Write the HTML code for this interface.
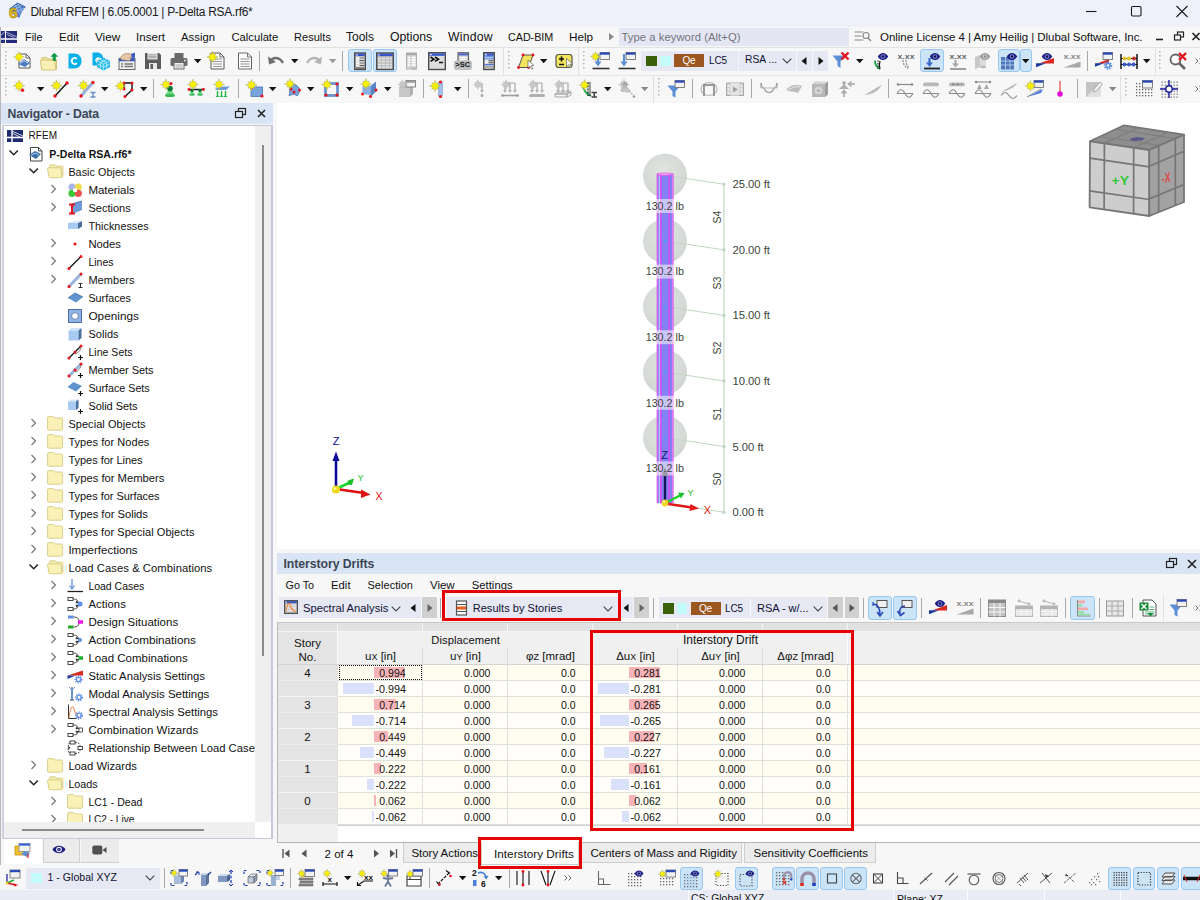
<!DOCTYPE html>
<html><head><meta charset="utf-8"><title>Dlubal RFEM</title>
<style>
*{box-sizing:border-box;margin:0;padding:0}
html,body{width:1200px;height:900px;overflow:hidden;background:#f0f0f0;font-family:"Liberation Sans","DejaVu Sans",sans-serif;font-size:11px;color:#111}
.a{position:absolute;display:block}
.t{position:absolute;white-space:nowrap;line-height:16px;height:16px;display:block}
svg{overflow:visible}
</style></head><body>
<div class="a" style="left:0px;top:0px;width:1200px;height:27px;background:#eef1f9;"></div>
<span class="t" style="left:30.50px;top:4px;font-size:12px;color:#1b1b1b;letter-spacing:-0.294px;">Dlubal RFEM | 6.05.0001 | P-Delta RSA.rf6*</span>
<svg class="a" style="left:1080px;top:0px;" width="120" height="24" viewBox="0 0 120 24"><path d="M6 11.5h10.5" stroke="#1a1a1a" stroke-width="1.1" fill="none"/><rect x="51.5" y="6.5" width="9.5" height="9.5" rx="1.2" fill="none" stroke="#1a1a1a" stroke-width="1.1"/><path d="M96.5 6l11 11M107.5 6l-11 11" stroke="#1a1a1a" stroke-width="1.1" fill="none"/></svg>
<div class="a" style="left:0px;top:27px;width:1200px;height:20px;background:#f7f7f7;"></div>
<span class="t" style="left:25.00px;top:29px;font-size:10.75px;color:#101010;letter-spacing:0.065px;">File</span>
<span class="t" style="left:59.00px;top:29px;font-size:11.5px;color:#101010;letter-spacing:0.046px;">Edit</span>
<span class="t" style="left:95.00px;top:29px;font-size:11.75px;color:#101010;letter-spacing:-0.037px;">View</span>
<span class="t" style="left:136.00px;top:29px;font-size:11.5px;color:#101010;letter-spacing:0.040px;">Insert</span>
<span class="t" style="left:181.00px;top:29px;font-size:11.25px;color:#101010;letter-spacing:0.064px;">Assign</span>
<span class="t" style="left:231.50px;top:29px;font-size:11.25px;color:#101010;letter-spacing:-0.022px;">Calculate</span>
<span class="t" style="left:294.00px;top:29px;font-size:11px;color:#101010;letter-spacing:0.046px;">Results</span>
<span class="t" style="left:346.00px;top:29px;font-size:12px;color:#101010;letter-spacing:-0.002px;">Tools</span>
<span class="t" style="left:390.00px;top:29px;font-size:12.25px;color:#101010;letter-spacing:-0.006px;">Options</span>
<span class="t" style="left:448.00px;top:29px;font-size:12.25px;color:#101010;letter-spacing:0.185px;">Window</span>
<span class="t" style="left:508.00px;top:29px;font-size:10.75px;color:#101010;letter-spacing:-0.025px;">CAD-BIM</span>
<span class="t" style="left:569.00px;top:29px;font-size:11.75px;color:#101010;letter-spacing:-0.016px;">Help</span>
<div class="a" style="left:619px;top:28px;width:230px;height:18px;background:#e4e6f3;"></div>
<svg class="a" style="left:608px;top:31px;" width="8" height="12" viewBox="0 0 8 12"><path d="M1 2l5 3.7-5 3.7z" fill="#8a8a8a"/></svg>
<span class="t" style="left:621.50px;top:29px;font-size:11.25px;color:#74747c;letter-spacing:0.053px;">Type a keyword (Alt+Q)</span>
<span class="t" style="left:880.00px;top:29px;font-size:11.5px;color:#101010;letter-spacing:-0.044px;">Online License 4 | Amy Heilig | Dlubal Software, Inc.</span>
<div class="a" style="left:0px;top:47px;width:1200px;height:28px;background:#f7f7f7;border-top:1px solid #e2e2e2;"></div>
<div class="a" style="left:0px;top:75px;width:1200px;height:28px;background:#f7f7f7;border-top:1px solid #e4e4e4;"></div>
<div class="a" style="left:0px;top:27px;width:1px;height:873px;background:#b8b8bc;"></div>
<div class="a" style="left:1px;top:103px;width:1199px;height:788px;background:#f7f7f7;"></div>
<div class="a" style="left:1px;top:103px;width:272px;height:21px;background:#d9e5f4;"></div>
<span class="t" style="left:7.50px;top:106px;font-size:12.25px;font-weight:bold;color:#3b4656;letter-spacing:-0.159px;">Navigator - Data</span>
<div class="a" style="left:2px;top:125px;width:271px;height:714px;background:#fff;border:1px solid #c6c6d6;border-right:2px solid #c8c8d8;border-left:2px solid #d0d0de;"></div>
<div class="a" style="left:255px;top:126px;width:16px;height:695.5px;background:#efefef;"></div>
<div class="a" style="left:262px;top:145px;width:2px;height:511px;background:#8a8a8a;"></div>
<div class="a" style="left:4px;top:821.5px;width:251px;height:16.5px;background:#efefef;"></div>
<div class="a" style="left:21.5px;top:829px;width:182px;height:2px;background:#8a8a8a;"></div>
<div class="a" style="left:277px;top:103px;width:923px;height:446px;background:#fff;"></div>
<div class="a" style="left:277px;top:553px;width:923px;height:21px;background:#d9e5f4;"></div>
<span class="t" style="left:283.50px;top:556px;font-size:12.25px;font-weight:bold;color:#3b4656;letter-spacing:-0.060px;">Interstory Drifts</span>
<div class="a" style="left:277px;top:574px;width:923px;height:291px;background:#f7f7f7;"></div>
<span class="t" style="left:285.50px;top:577px;font-size:10.75px;color:#101010;letter-spacing:0.029px;">Go To</span>
<span class="t" style="left:331.00px;top:577px;font-size:11.25px;color:#101010;letter-spacing:0.050px;">Edit</span>
<span class="t" style="left:367.50px;top:577px;font-size:11px;color:#101010;letter-spacing:0.028px;">Selection</span>
<span class="t" style="left:430.00px;top:577px;font-size:11.5px;color:#101010;letter-spacing:-0.054px;">View</span>
<span class="t" style="left:471.70px;top:577px;font-size:11.25px;color:#101010;letter-spacing:0.041px;">Settings</span>
<div class="a" style="left:0px;top:865px;width:1200px;height:26px;background:#f7f7f7;"></div>
<div class="a" style="left:0px;top:889px;width:1200px;height:11px;background:#e9ebf5;border-top:1px solid #f4f4f8;"></div>
<div class="a" style="left:688px;top:890px;width:1px;height:10px;background:#fbfbfd;"></div>
<div class="a" style="left:893px;top:890px;width:1px;height:10px;background:#fbfbfd;"></div>
<div class="a" style="left:967px;top:890px;width:1px;height:10px;background:#fbfbfd;"></div>
<div class="a" style="left:1044px;top:890px;width:1px;height:10px;background:#fbfbfd;"></div>
<div class="a" style="left:1120px;top:890px;width:1px;height:10px;background:#fbfbfd;"></div>
<span class="t" style="left:691.00px;top:891px;font-size:10.25px;color:#101010;letter-spacing:0.072px;">CS: Global XYZ</span>
<span class="t" style="left:897.00px;top:891px;font-size:10.5px;color:#101010;letter-spacing:-0.012px;">Plane: XZ</span>
<div class="a" style="left:3px;top:126px;width:252px;height:695.500px;overflow:hidden">
<svg class="a" style="left:4px;top:1.8px;" width="16" height="16" viewBox="0 0 16 16"><rect x="0" y="2" width="16" height="12" fill="#1d2a6e"/><path d="M0 9.5h16" stroke="#fff" stroke-width="1.6"/><path d="M5 2v12" stroke="#fff" stroke-width="1.4"/><path d="M5 3l11 5M5 5l8 4" stroke="#fff" stroke-width=".8"/></svg>
<span class="t" style="left:25.50px;top:2px;font-size:10px;color:#111;letter-spacing:0.043px;">RFEM</span>
<svg class="a" style="left:4.5px;top:23.3px;" width="12" height="8" viewBox="0 0 12 8"><path d="M1.500 1.500l4.200 4.200 4.200-4.200" stroke="#222" stroke-width="1.500" fill="none"/></svg>
<svg class="a" style="left:25px;top:19.8px;" width="16" height="16" viewBox="0 0 16 16"><path d="M2.5 1.5h8l3.5 3.5v10h-11.5z" fill="#fff" stroke="#444" stroke-width="1"/><path d="M10.5 1.5v3.5h3.5" fill="none" stroke="#444"/><path d="M1 9l6-4 6 3-5 5z" fill="#3a6ea8"/><path d="M3 9.5l4-2.5 4 2" stroke="#bcd4ee" stroke-width="1" fill="none"/></svg>
<span class="t" style="left:46.20px;top:20px;font-size:10.5px;font-weight:bold;color:#111;letter-spacing:0.045px;">P-Delta RSA.rf6*</span>
<svg class="a" style="left:24.5px;top:41.3px;" width="12" height="8" viewBox="0 0 12 8"><path d="M1.500 1.500l4.200 4.200 4.200-4.200" stroke="#222" stroke-width="1.500" fill="none"/></svg>
<svg class="a" style="left:44px;top:37.9px;" width="16" height="15" viewBox="0 0 16 15"><path d="M2.700 1.800q0-1 1-1h4q0.800 0 1.200 0.700l0.400 0.700h5.600q1 0 1 1v9.500h-13.200z" fill="#f6eeb0" stroke="#d4c880" stroke-width=".9"/><path d="M0.600 4.800q-0.200-1 0.800-1h11.600q1 0 1.100 1l0.700 7.700q0.100 1.200-1 1.200h-10.600q-1.200 0-1.400-1.200z" fill="#f9f1b6" stroke="#d4c880" stroke-width=".9"/></svg>
<span class="t" style="left:65.40px;top:38px;font-size:10.75px;color:#111;letter-spacing:0.060px;">Basic Objects</span>
<svg class="a" style="left:47px;top:57.4px;" width="8" height="12" viewBox="0 0 8 12"><path d="M1.500 2l4 4-4 4" stroke="#7c7c7c" stroke-width="1.300" fill="none"/></svg>
<svg class="a" style="left:64px;top:55.8px;" width="16" height="16" viewBox="0 0 16 16"><circle cx="5" cy="5" r="3.6" fill="#a9b4ea"/><circle cx="11.3" cy="5" r="3.6" fill="#f0dc50"/><circle cx="5" cy="11.3" r="3.6" fill="#38c838"/><circle cx="11.3" cy="11.3" r="3.6" fill="#e85050"/><circle cx="8.1" cy="8.1" r="2.2" fill="#fff"/></svg>
<span class="t" style="left:85.40px;top:56px;font-size:11.5px;color:#111;letter-spacing:-0.050px;">Materials</span>
<svg class="a" style="left:47px;top:75.4px;" width="8" height="12" viewBox="0 0 8 12"><path d="M1.500 2l4 4-4 4" stroke="#7c7c7c" stroke-width="1.300" fill="none"/></svg>
<svg class="a" style="left:64px;top:73.8px;" width="16" height="16" viewBox="0 0 16 16"><path d="M5 4l10-3v9l-10 4z" fill="#6f9bd8"/><path d="M5 4l10-3" stroke="#4a74b4"/><path d="M2 4.5h6M2 13.5h6M5 4.5v9" stroke="#e8141c" stroke-width="2"/></svg>
<span class="t" style="left:85.40px;top:74px;font-size:11px;color:#111;letter-spacing:0.026px;">Sections</span>
<svg class="a" style="left:64px;top:91.8px;" width="16" height="16" viewBox="0 0 16 16"><path d="M1 5l10-2.5 4 0.5-10 2.5z" fill="#cfe2f8"/><path d="M1 5h10v6h-10z" fill="#a9cbf2"/><path d="M11 5l4-2v5.5l-4 2.5z" fill="#4a6ea0"/></svg>
<span class="t" style="left:85.40px;top:92px;font-size:10.75px;color:#111;letter-spacing:0.057px;">Thicknesses</span>
<svg class="a" style="left:47px;top:111.4px;" width="8" height="12" viewBox="0 0 8 12"><path d="M1.500 2l4 4-4 4" stroke="#7c7c7c" stroke-width="1.300" fill="none"/></svg>
<svg class="a" style="left:64px;top:109.8px;" width="16" height="16" viewBox="0 0 16 16"><circle cx="8" cy="8" r="1.6" fill="#e8141c"/></svg>
<span class="t" style="left:85.40px;top:110px;font-size:11.25px;color:#111;letter-spacing:-0.016px;">Nodes</span>
<svg class="a" style="left:47px;top:129.4px;" width="8" height="12" viewBox="0 0 8 12"><path d="M1.500 2l4 4-4 4" stroke="#7c7c7c" stroke-width="1.300" fill="none"/></svg>
<svg class="a" style="left:64px;top:127.8px;" width="16" height="16" viewBox="0 0 16 16"><path d="M2 14.5L14 2.5" stroke="#111" stroke-width="1.3"/><circle cx="2" cy="14.5" r="1.5" fill="#e8141c"/><circle cx="14" cy="2.5" r="1.5" fill="#e8141c"/></svg>
<span class="t" style="left:85.40px;top:128px;font-size:10.5px;color:#111;letter-spacing:-0.000px;">Lines</span>
<svg class="a" style="left:47px;top:147.4px;" width="8" height="12" viewBox="0 0 8 12"><path d="M1.500 2l4 4-4 4" stroke="#7c7c7c" stroke-width="1.300" fill="none"/></svg>
<svg class="a" style="left:64px;top:145.8px;" width="16" height="16" viewBox="0 0 16 16"><path d="M2 14.5L14 2" stroke="#9ab4dc" stroke-width="3"/><circle cx="2" cy="14.5" r="1.5" fill="#e8141c"/><circle cx="14" cy="2" r="1.5" fill="#e8141c"/><path d="M11.5 11.5h4M11.5 15.5h4M13.5 11.5v4" stroke="#333" stroke-width="1"/></svg>
<span class="t" style="left:85.40px;top:146px;font-size:11px;color:#111;letter-spacing:0.052px;">Members</span>
<svg class="a" style="left:64px;top:163.8px;" width="16" height="16" viewBox="0 0 16 16"><path d="M1 8l7-5 8 4-7 5.5z" fill="#5f93cf"/><path d="M1 8l7-5 8 4" fill="none" stroke="#3f6ea8" stroke-width=".8"/></svg>
<span class="t" style="left:85.40px;top:164px;font-size:10.75px;color:#111;letter-spacing:0.021px;">Surfaces</span>
<svg class="a" style="left:64px;top:181.8px;" width="16" height="16" viewBox="0 0 16 16"><rect x="1.5" y="1.5" width="13" height="13" fill="#8fb2e2" stroke="#4a70aa"/><circle cx="8" cy="8" r="3.4" fill="#fff" stroke="#4a70aa" stroke-width=".8"/></svg>
<span class="t" style="left:85.40px;top:182px;font-size:11.75px;color:#111;letter-spacing:0.040px;">Openings</span>
<svg class="a" style="left:64px;top:199.8px;" width="16" height="16" viewBox="0 0 16 16"><path d="M1.5 4.5l3-2.5h10l-3 2.5z" fill="#d2e4f8"/><path d="M1.5 4.5h10v10h-10z" fill="#a9cbf2"/><path d="M11.5 4.5l3-2.5v10l-3 2.5z" fill="#4a6ea0"/></svg>
<span class="t" style="left:85.40px;top:200px;font-size:11px;color:#111;letter-spacing:0.040px;">Solids</span>
<svg class="a" style="left:64px;top:217.8px;" width="16" height="16" viewBox="0 0 16 16"><path d="M2 14L14 2" stroke="#111" stroke-width="1.2"/><path d="M8 10c3-1 5-3 6-6" stroke="#666" fill="none" stroke-width=".8"/><circle cx="2" cy="14" r="1.5" fill="#e8141c"/><circle cx="8" cy="8" r="1.5" fill="#e8141c"/><circle cx="14" cy="2" r="1.5" fill="#e8141c"/><path d="M11 13.5h5M13.5 11v5" stroke="#111" stroke-width="1.2"/></svg>
<span class="t" style="left:85.40px;top:218px;font-size:10.5px;color:#111;letter-spacing:0.036px;">Line Sets</span>
<svg class="a" style="left:64px;top:235.8px;" width="16" height="16" viewBox="0 0 16 16"><path d="M2 14L14 2" stroke="#9ab4dc" stroke-width="3"/><path d="M8 10c3-1 5-3 6-6" stroke="#666" fill="none" stroke-width=".8"/><circle cx="2" cy="14" r="1.5" fill="#e8141c"/><circle cx="8" cy="8" r="1.5" fill="#e8141c"/><circle cx="14" cy="2" r="1.5" fill="#e8141c"/><path d="M11 13.5h5M13.5 11v5" stroke="#111" stroke-width="1.2"/></svg>
<span class="t" style="left:85.40px;top:236px;font-size:11px;color:#111;letter-spacing:-0.019px;">Member Sets</span>
<svg class="a" style="left:64px;top:253.8px;" width="16" height="16" viewBox="0 0 16 16"><path d="M0.5 7l6-5 8.5 4-6 5.5z" fill="#5f93cf"/><path d="M11 13.5h5M13.5 11v5" stroke="#111" stroke-width="1.2"/></svg>
<span class="t" style="left:85.40px;top:254px;font-size:10.75px;color:#111;letter-spacing:-0.022px;">Surface Sets</span>
<svg class="a" style="left:64px;top:271.8px;" width="16" height="16" viewBox="0 0 16 16"><path d="M1 3.5l2.5-2h8l-2.5 2z" fill="#d2e4f8"/><path d="M1 3.5h8v8.500h-8z" fill="#a9cbf2"/><path d="M9 3.5l2.500-2v8.500l-2.500 2z" fill="#4a6ea0"/><path d="M11 13.5h5M13.5 11v5" stroke="#111" stroke-width="1.2"/></svg>
<span class="t" style="left:85.40px;top:272px;font-size:11px;color:#111;letter-spacing:-0.033px;">Solid Sets</span>
<svg class="a" style="left:27px;top:291.4px;" width="8" height="12" viewBox="0 0 8 12"><path d="M1.500 2l4 4-4 4" stroke="#7c7c7c" stroke-width="1.300" fill="none"/></svg>
<svg class="a" style="left:44px;top:289.9px;" width="16" height="15" viewBox="0 0 16 15"><path d="M0.600 1.800q0-1.200 1.200-1.200h4.200q0.800 0 1.300 0.700l0.500 0.700h6.600q1.200 0 1.200 1.200v9.800q0 1.200-1.200 1.200h-12.600q-1.200 0-1.200-1.200z" fill="#f9f1b6" stroke="#d6ca84" stroke-width=".9"/></svg>
<span class="t" style="left:65.40px;top:290px;font-size:11px;color:#111;letter-spacing:0.052px;">Special Objects</span>
<svg class="a" style="left:27px;top:309.4px;" width="8" height="12" viewBox="0 0 8 12"><path d="M1.500 2l4 4-4 4" stroke="#7c7c7c" stroke-width="1.300" fill="none"/></svg>
<svg class="a" style="left:44px;top:307.9px;" width="16" height="15" viewBox="0 0 16 15"><path d="M0.600 1.800q0-1.200 1.200-1.200h4.200q0.800 0 1.300 0.700l0.500 0.700h6.600q1.200 0 1.200 1.200v9.800q0 1.200-1.200 1.200h-12.600q-1.200 0-1.200-1.200z" fill="#f9f1b6" stroke="#d6ca84" stroke-width=".9"/></svg>
<span class="t" style="left:65.40px;top:308px;font-size:11px;color:#111;letter-spacing:0.061px;">Types for Nodes</span>
<svg class="a" style="left:27px;top:327.4px;" width="8" height="12" viewBox="0 0 8 12"><path d="M1.500 2l4 4-4 4" stroke="#7c7c7c" stroke-width="1.300" fill="none"/></svg>
<svg class="a" style="left:44px;top:325.9px;" width="16" height="15" viewBox="0 0 16 15"><path d="M0.600 1.800q0-1.200 1.200-1.200h4.200q0.800 0 1.300 0.700l0.500 0.700h6.600q1.200 0 1.200 1.200v9.800q0 1.200-1.200 1.200h-12.600q-1.200 0-1.200-1.200z" fill="#f9f1b6" stroke="#d6ca84" stroke-width=".9"/></svg>
<span class="t" style="left:65.40px;top:326px;font-size:11px;color:#111;letter-spacing:-0.026px;">Types for Lines</span>
<svg class="a" style="left:27px;top:345.4px;" width="8" height="12" viewBox="0 0 8 12"><path d="M1.500 2l4 4-4 4" stroke="#7c7c7c" stroke-width="1.300" fill="none"/></svg>
<svg class="a" style="left:44px;top:343.9px;" width="16" height="15" viewBox="0 0 16 15"><path d="M0.600 1.800q0-1.200 1.200-1.200h4.200q0.800 0 1.300 0.700l0.500 0.700h6.600q1.200 0 1.200 1.200v9.800q0 1.200-1.200 1.200h-12.600q-1.200 0-1.200-1.200z" fill="#f9f1b6" stroke="#d6ca84" stroke-width=".9"/></svg>
<span class="t" style="left:65.40px;top:344px;font-size:11.25px;color:#111;letter-spacing:-0.021px;">Types for Members</span>
<svg class="a" style="left:27px;top:363.4px;" width="8" height="12" viewBox="0 0 8 12"><path d="M1.500 2l4 4-4 4" stroke="#7c7c7c" stroke-width="1.300" fill="none"/></svg>
<svg class="a" style="left:44px;top:361.9px;" width="16" height="15" viewBox="0 0 16 15"><path d="M0.600 1.800q0-1.200 1.200-1.200h4.200q0.800 0 1.300 0.700l0.500 0.700h6.600q1.200 0 1.200 1.200v9.800q0 1.200-1.200 1.200h-12.600q-1.200 0-1.200-1.200z" fill="#f9f1b6" stroke="#d6ca84" stroke-width=".9"/></svg>
<span class="t" style="left:65.40px;top:362px;font-size:11px;color:#111;letter-spacing:-0.028px;">Types for Surfaces</span>
<svg class="a" style="left:27px;top:381.4px;" width="8" height="12" viewBox="0 0 8 12"><path d="M1.500 2l4 4-4 4" stroke="#7c7c7c" stroke-width="1.300" fill="none"/></svg>
<svg class="a" style="left:44px;top:379.9px;" width="16" height="15" viewBox="0 0 16 15"><path d="M0.600 1.800q0-1.200 1.200-1.200h4.200q0.800 0 1.300 0.700l0.500 0.700h6.600q1.200 0 1.200 1.200v9.800q0 1.200-1.200 1.200h-12.600q-1.200 0-1.200-1.200z" fill="#f9f1b6" stroke="#d6ca84" stroke-width=".9"/></svg>
<span class="t" style="left:65.40px;top:380px;font-size:11.25px;color:#111;letter-spacing:-0.031px;">Types for Solids</span>
<svg class="a" style="left:27px;top:399.4px;" width="8" height="12" viewBox="0 0 8 12"><path d="M1.500 2l4 4-4 4" stroke="#7c7c7c" stroke-width="1.300" fill="none"/></svg>
<svg class="a" style="left:44px;top:397.9px;" width="16" height="15" viewBox="0 0 16 15"><path d="M0.600 1.800q0-1.200 1.200-1.200h4.200q0.800 0 1.300 0.700l0.500 0.700h6.600q1.200 0 1.200 1.200v9.800q0 1.200-1.200 1.200h-12.600q-1.200 0-1.200-1.200z" fill="#f9f1b6" stroke="#d6ca84" stroke-width=".9"/></svg>
<span class="t" style="left:65.40px;top:398px;font-size:11px;color:#111;letter-spacing:0.055px;">Types for Special Objects</span>
<svg class="a" style="left:27px;top:417.4px;" width="8" height="12" viewBox="0 0 8 12"><path d="M1.500 2l4 4-4 4" stroke="#7c7c7c" stroke-width="1.300" fill="none"/></svg>
<svg class="a" style="left:44px;top:415.9px;" width="16" height="15" viewBox="0 0 16 15"><path d="M0.600 1.800q0-1.200 1.200-1.200h4.200q0.800 0 1.300 0.700l0.500 0.700h6.600q1.200 0 1.200 1.200v9.800q0 1.200-1.200 1.200h-12.600q-1.200 0-1.200-1.200z" fill="#f9f1b6" stroke="#d6ca84" stroke-width=".9"/></svg>
<span class="t" style="left:65.40px;top:416px;font-size:11.5px;color:#111;letter-spacing:0.013px;">Imperfections</span>
<svg class="a" style="left:24.5px;top:437.3px;" width="12" height="8" viewBox="0 0 12 8"><path d="M1.500 1.500l4.200 4.200 4.200-4.200" stroke="#222" stroke-width="1.500" fill="none"/></svg>
<svg class="a" style="left:44px;top:433.9px;" width="16" height="15" viewBox="0 0 16 15"><path d="M2.700 1.800q0-1 1-1h4q0.800 0 1.200 0.700l0.400 0.700h5.600q1 0 1 1v9.500h-13.200z" fill="#f6eeb0" stroke="#d4c880" stroke-width=".9"/><path d="M0.600 4.800q-0.200-1 0.800-1h11.600q1 0 1.100 1l0.700 7.700q0.100 1.200-1 1.200h-10.600q-1.200 0-1.400-1.200z" fill="#f9f1b6" stroke="#d4c880" stroke-width=".9"/></svg>
<span class="t" style="left:65.40px;top:434px;font-size:11.25px;color:#111;letter-spacing:0.053px;">Load Cases &amp; Combinations</span>
<svg class="a" style="left:47px;top:453.4px;" width="8" height="12" viewBox="0 0 8 12"><path d="M1.500 2l4 4-4 4" stroke="#7c7c7c" stroke-width="1.300" fill="none"/></svg>
<svg class="a" style="left:64px;top:451.8px;" width="16" height="16" viewBox="0 0 16 16"><path d="M5 1v9" stroke="#5f8fd8" stroke-width="1.3"/><path d="M2.5 7.500l2.500 3.500 2.500-3.500" fill="none" stroke="#5f8fd8" stroke-width="1.2"/><path d="M0.5 13.500h15.500" stroke="#222" stroke-width="1.3"/></svg>
<span class="t" style="left:85.40px;top:452px;font-size:10.5px;color:#111;letter-spacing:-0.013px;">Load Cases</span>
<svg class="a" style="left:47px;top:471.4px;" width="8" height="12" viewBox="0 0 8 12"><path d="M1.500 2l4 4-4 4" stroke="#7c7c7c" stroke-width="1.300" fill="none"/></svg>
<svg class="a" style="left:64px;top:469.8px;" width="16" height="16" viewBox="0 0 16 16"><rect x="1" y="1.5" width="5" height="3" fill="#fff" stroke="#333" stroke-width=".9"/><rect x="1" y="11.500" width="5" height="3" fill="#fff" stroke="#333" stroke-width=".9"/><path d="M6 3c4 0 5 1.500 5.500 4M6 13c4 0 5-1.500 5.500-4" fill="none" stroke="#333" stroke-width=".9"/><path d="M9.500 4.500l2.500 2.500-3.500 0.300zM9.500 11.500l2.500-2.500-3.500-.3z" fill="#333"/><circle cx="13" cy="8" r="2.500" fill="#5f8fe8"/></svg>
<span class="t" style="left:85.40px;top:470px;font-size:11.25px;color:#111;letter-spacing:0.081px;">Actions</span>
<svg class="a" style="left:47px;top:489.4px;" width="8" height="12" viewBox="0 0 8 12"><path d="M1.500 2l4 4-4 4" stroke="#7c7c7c" stroke-width="1.300" fill="none"/></svg>
<svg class="a" style="left:64px;top:487.8px;" width="16" height="16" viewBox="0 0 16 16"><rect x="1" y="1.500" width="5.500" height="3" fill="#5f8fe8"/><rect x="1" y="11.500" width="5.500" height="3" fill="#28a828"/><path d="M6.500 3c4 0 5 1.500 5.500 4M6.500 13c4 0 5-1.500 5.500-4" fill="none" stroke="#333" stroke-width=".9"/><rect x="11" y="6.300" width="5" height="3.400" fill="#f010e8"/></svg>
<span class="t" style="left:85.40px;top:488px;font-size:11.5px;color:#111;letter-spacing:0.018px;">Design Situations</span>
<svg class="a" style="left:47px;top:507.4px;" width="8" height="12" viewBox="0 0 8 12"><path d="M1.500 2l4 4-4 4" stroke="#7c7c7c" stroke-width="1.300" fill="none"/></svg>
<svg class="a" style="left:64px;top:505.8px;" width="16" height="16" viewBox="0 0 16 16"><rect x="1" y="1.5" width="5" height="3" fill="#fff" stroke="#333" stroke-width=".9"/><rect x="1" y="11.500" width="5" height="3" fill="#fff" stroke="#333" stroke-width=".9"/><path d="M6 3c4 0 5 1.500 5.500 4M6 13c4 0 5-1.500 5.500-4" fill="none" stroke="#333" stroke-width=".9"/><path d="M9.500 4.500l2.500 2.500-3.500 0.300zM9.500 11.500l2.500-2.500-3.500-.3z" fill="#333"/><path d="M13 5.500l2.500 2.500-2.500 2.500-2.500-2.500z" fill="#5f8fe8"/></svg>
<span class="t" style="left:85.40px;top:506px;font-size:11.75px;color:#111;letter-spacing:-0.016px;">Action Combinations</span>
<svg class="a" style="left:47px;top:525.4px;" width="8" height="12" viewBox="0 0 8 12"><path d="M1.500 2l4 4-4 4" stroke="#7c7c7c" stroke-width="1.300" fill="none"/></svg>
<svg class="a" style="left:64px;top:523.8px;" width="16" height="16" viewBox="0 0 16 16"><rect x="1" y="1.5" width="5" height="3" fill="#fff" stroke="#333" stroke-width=".9"/><rect x="1" y="11.500" width="5" height="3" fill="#fff" stroke="#333" stroke-width=".9"/><path d="M6 3c4 0 5 1.500 5.500 4M6 13c4 0 5-1.500 5.500-4" fill="none" stroke="#333" stroke-width=".9"/><path d="M9.500 4.500l2.500 2.500-3.500 0.300zM9.500 11.500l2.500-2.500-3.500-.3z" fill="#333"/><rect x="11.500" y="6.300" width="4.500" height="3.400" fill="#18b028"/></svg>
<span class="t" style="left:85.40px;top:524px;font-size:11.5px;color:#111;letter-spacing:0.018px;">Load Combinations</span>
<svg class="a" style="left:47px;top:543.4px;" width="8" height="12" viewBox="0 0 8 12"><path d="M1.500 2l4 4-4 4" stroke="#7c7c7c" stroke-width="1.300" fill="none"/></svg>
<svg class="a" style="left:64px;top:541.8px;" width="16" height="16" viewBox="0 0 16 16"><path d="M0.500 7.500h15.500v-5z" fill="#d82a20"/><path d="M0.500 7.500h8l-8 3.500z" fill="#1a3a9a"/><circle cx="11.5" cy="11.5" r="3" fill="none" stroke="#5f8fe8" stroke-width="2" stroke-dasharray="1.2 1"/><circle cx="11.5" cy="11.5" r="2" fill="none" stroke="#5f8fe8" stroke-width="1.200"/></svg>
<span class="t" style="left:85.40px;top:542px;font-size:11.25px;color:#111;letter-spacing:0.012px;">Static Analysis Settings</span>
<svg class="a" style="left:47px;top:561.4px;" width="8" height="12" viewBox="0 0 8 12"><path d="M1.500 2l4 4-4 4" stroke="#7c7c7c" stroke-width="1.300" fill="none"/></svg>
<svg class="a" style="left:64px;top:559.8px;" width="16" height="16" viewBox="0 0 16 16"><path d="M5 1v13M3 14h4" stroke="#333" stroke-width="1"/><path d="M2 1c4 3 4 8 3 13M8 1c-4 3-4 8-3 13" fill="none" stroke="#5f8fe8" stroke-width=".9"/><circle cx="12" cy="11.5" r="3" fill="none" stroke="#5f8fe8" stroke-width="2" stroke-dasharray="1.2 1"/><circle cx="12" cy="11.5" r="2" fill="none" stroke="#5f8fe8" stroke-width="1.200"/></svg>
<span class="t" style="left:85.40px;top:560px;font-size:11.5px;color:#111;letter-spacing:-0.024px;">Modal Analysis Settings</span>
<svg class="a" style="left:47px;top:579.4px;" width="8" height="12" viewBox="0 0 8 12"><path d="M1.500 2l4 4-4 4" stroke="#7c7c7c" stroke-width="1.300" fill="none"/></svg>
<svg class="a" style="left:64px;top:577.8px;" width="16" height="16" viewBox="0 0 16 16"><path d="M1.500 0.500v14h8" stroke="#333" stroke-width="1" fill="none"/><path d="M2 14c2-14 4-14 6-6 1 3 2 4 4 4.500" fill="none" stroke="#f08040" stroke-width="1"/><circle cx="12" cy="11.5" r="3" fill="none" stroke="#5f8fe8" stroke-width="2" stroke-dasharray="1.2 1"/><circle cx="12" cy="11.5" r="2" fill="none" stroke="#5f8fe8" stroke-width="1.200"/></svg>
<span class="t" style="left:85.40px;top:578px;font-size:11.25px;color:#111;letter-spacing:0.005px;">Spectral Analysis Settings</span>
<svg class="a" style="left:47px;top:597.4px;" width="8" height="12" viewBox="0 0 8 12"><path d="M1.500 2l4 4-4 4" stroke="#7c7c7c" stroke-width="1.300" fill="none"/></svg>
<svg class="a" style="left:64px;top:595.8px;" width="16" height="16" viewBox="0 0 16 16"><rect x="1" y="1.5" width="5" height="3" fill="#fff" stroke="#333" stroke-width=".9"/><rect x="1" y="11.500" width="5" height="3" fill="#fff" stroke="#333" stroke-width=".9"/><path d="M6 3c4 0 5 1.500 5.500 4M6 13c4 0 5-1.500 5.500-4" fill="none" stroke="#333" stroke-width=".9"/><path d="M9.500 4.500l2.500 2.500-3.500 0.300zM9.500 11.500l2.500-2.500-3.500-.3z" fill="#333"/><path d="M12 6l3.500 0v4h-3.500z" fill="#fff" stroke="#333" stroke-width=".8"/></svg>
<span class="t" style="left:85.40px;top:596px;font-size:11.5px;color:#111;letter-spacing:0.032px;">Combination Wizards</span>
<svg class="a" style="left:64px;top:613.8px;" width="16" height="16" viewBox="0 0 16 16"><rect x="3" y="1" width="5" height="3" fill="#fff" stroke="#333" stroke-width=".9"/><rect x="3" y="12" width="5" height="3" fill="#fff" stroke="#333" stroke-width=".9"/><rect x="11" y="6.500" width="4.500" height="3" fill="#fff" stroke="#333" stroke-width=".9"/><path d="M8 2.500c4 0 5 1.500 5 3.500M8 13.500c4 0 5-1.500 5-3.500M3 2.500c-2.500 1-2.500 10 0 11" fill="none" stroke="#333" stroke-width=".9" stroke-dasharray="2 1"/><path d="M1 7l1 2.500 1.500-2.500z" fill="#333"/></svg>
<span class="t" style="left:85.40px;top:614px;font-size:11.25px;color:#111;letter-spacing:0.005px;">Relationship Between Load Case</span>
<svg class="a" style="left:27px;top:633.4px;" width="8" height="12" viewBox="0 0 8 12"><path d="M1.500 2l4 4-4 4" stroke="#7c7c7c" stroke-width="1.300" fill="none"/></svg>
<svg class="a" style="left:44px;top:631.9px;" width="16" height="15" viewBox="0 0 16 15"><path d="M0.600 1.800q0-1.200 1.200-1.200h4.200q0.800 0 1.300 0.700l0.500 0.700h6.600q1.200 0 1.200 1.200v9.800q0 1.200-1.200 1.200h-12.600q-1.200 0-1.200-1.200z" fill="#f9f1b6" stroke="#d6ca84" stroke-width=".9"/></svg>
<span class="t" style="left:65.40px;top:632px;font-size:11.25px;color:#111;letter-spacing:-0.023px;">Load Wizards</span>
<svg class="a" style="left:24.5px;top:653.3px;" width="12" height="8" viewBox="0 0 12 8"><path d="M1.500 1.500l4.200 4.200 4.200-4.200" stroke="#222" stroke-width="1.500" fill="none"/></svg>
<svg class="a" style="left:44px;top:649.9px;" width="16" height="15" viewBox="0 0 16 15"><path d="M2.700 1.800q0-1 1-1h4q0.800 0 1.200 0.700l0.400 0.700h5.600q1 0 1 1v9.500h-13.200z" fill="#f6eeb0" stroke="#d4c880" stroke-width=".9"/><path d="M0.600 4.800q-0.200-1 0.800-1h11.600q1 0 1.100 1l0.700 7.700q0.100 1.200-1 1.200h-10.600q-1.200 0-1.400-1.200z" fill="#f9f1b6" stroke="#d4c880" stroke-width=".9"/></svg>
<span class="t" style="left:65.40px;top:650px;font-size:10.75px;color:#111;letter-spacing:-0.011px;">Loads</span>
<svg class="a" style="left:47px;top:669.4px;" width="8" height="12" viewBox="0 0 8 12"><path d="M1.500 2l4 4-4 4" stroke="#7c7c7c" stroke-width="1.300" fill="none"/></svg>
<svg class="a" style="left:64px;top:667.9px;" width="16" height="15" viewBox="0 0 16 15"><path d="M0.600 1.800q0-1.200 1.200-1.200h4.200q0.800 0 1.300 0.700l0.500 0.700h6.600q1.200 0 1.200 1.200v9.800q0 1.200-1.200 1.200h-12.600q-1.200 0-1.200-1.200z" fill="#f9f1b6" stroke="#d6ca84" stroke-width=".9"/></svg>
<span class="t" style="left:85.40px;top:668px;font-size:10.5px;color:#111;letter-spacing:0.031px;">LC1 - Dead</span>
<svg class="a" style="left:47px;top:687.4px;" width="8" height="12" viewBox="0 0 8 12"><path d="M1.500 2l4 4-4 4" stroke="#7c7c7c" stroke-width="1.300" fill="none"/></svg>
<svg class="a" style="left:64px;top:685.9px;" width="16" height="15" viewBox="0 0 16 15"><path d="M0.600 1.800q0-1.200 1.200-1.200h4.200q0.800 0 1.300 0.700l0.500 0.700h6.600q1.200 0 1.200 1.200v9.800q0 1.200-1.200 1.200h-12.600q-1.200 0-1.200-1.200z" fill="#f9f1b6" stroke="#d6ca84" stroke-width=".9"/></svg>
<span class="t" style="left:85.40px;top:686px;font-size:10px;color:#111;letter-spacing:0.033px;">LC2 - Live</span>
</div>
<div class="a" style="left:2px;top:838px;width:271px;height:1px;background:#c6c9d8;"></div>
<div class="a" style="left:4px;top:839px;width:38px;height:25px;background:#fff;"></div>
<div class="a" style="left:43px;top:839px;width:37px;height:23px;background:#ececec;border-right:1px solid #d0d0d0;border-left:1px solid #d0d0d0;"></div>
<div class="a" style="left:81px;top:839px;width:38px;height:23px;background:#ececec;"></div>
<div class="a" style="left:43px;top:862px;width:76px;height:1px;background:#d0d0d0;"></div>
<svg class="a" style="left:14px;top:842px;" width="18" height="18" viewBox="0 0 18 18"><path d="M1 4h6l1 1.500h6v7.500h-13z" fill="#f0c030" stroke="#c09010" stroke-width=".8"/><rect x="5" y="1.500" width="11" height="8" fill="#f4f4f4" stroke="#888" stroke-width=".8"/><rect x="5" y="1.500" width="11" height="2.200" fill="#3a6ad8"/><path d="M7 12l4-3 5 2-3 4z" fill="#5f93cf"/><path d="M14 12v4" stroke="#e8141c" stroke-width="1.200"/></svg>
<svg class="a" style="left:52px;top:845px;" width="14" height="9" viewBox="0 0 14 9"><path d="M0.500 4.500c3-5 10-5 13 0-3 5-10 5-13 0z" fill="#1c1c84"/><circle cx="7" cy="4.500" r="2.800" fill="#fff"/><circle cx="7" cy="4.500" r="1.800" fill="#1c1c84"/><circle cx="7" cy="4.500" r=".7" fill="#99a"/></svg>
<svg class="a" style="left:92px;top:845px;" width="15" height="10" viewBox="0 0 15 10"><rect x="0.300" y="0.500" width="10" height="9" rx="2" fill="#505050"/><path d="M10.500 5l4-3v6z" fill="#505050"/></svg>
<svg class="a" style="left:277px;top:103px" width="923" height="446" viewBox="277 103 923 446"><defs><radialGradient id="sph" cx="45%" cy="40%" r="60%"><stop offset="0" stop-color="#e0e3e0"/><stop offset="0.8" stop-color="#d6dad6"/><stop offset="1" stop-color="#d0d5d0"/></radialGradient><linearGradient id="cubF" x1="0" y1="0" x2="0" y2="1"><stop offset="0" stop-color="#d0d0d0"/><stop offset="1" stop-color="#c8c8c8"/></linearGradient></defs><circle cx="665" cy="175.6" r="22" fill="url(#sph)"/><circle cx="665" cy="241.1" r="22" fill="url(#sph)"/><circle cx="665" cy="306.6" r="22" fill="url(#sph)"/><circle cx="665" cy="372.1" r="22" fill="url(#sph)"/><circle cx="665" cy="437.6" r="22" fill="url(#sph)"/><path d="M723.9 184.2V512.2" stroke="#c3d9c3" stroke-width="1.2" fill="none"/><path d="M673.5 176.8L723.9 184.2" stroke="#c3d9c3" stroke-width="1" fill="none"/><circle cx="723.9" cy="184.2" r="1.8" fill="#c3d9c3"/><path d="M673.5 242.3L723.9 249.8" stroke="#c3d9c3" stroke-width="1" fill="none"/><circle cx="723.9" cy="249.8" r="1.8" fill="#c3d9c3"/><path d="M673.5 307.8L723.9 315.4" stroke="#c3d9c3" stroke-width="1" fill="none"/><circle cx="723.9" cy="315.4" r="1.8" fill="#c3d9c3"/><path d="M673.5 373.3L723.9 381" stroke="#c3d9c3" stroke-width="1" fill="none"/><circle cx="723.9" cy="381" r="1.8" fill="#c3d9c3"/><path d="M673.5 438.8L723.9 446.6" stroke="#c3d9c3" stroke-width="1" fill="none"/><circle cx="723.9" cy="446.6" r="1.8" fill="#c3d9c3"/><path d="M673.5 504.4L723.9 512.2" stroke="#c3d9c3" stroke-width="1" fill="none"/><circle cx="723.9" cy="512.2" r="1.8" fill="#c3d9c3"/><rect x="656.800" y="173.6" width="16.700" height="329.6" fill="#8282f4"/><rect x="658.800" y="173.6" width="1.300" height="329.6" fill="#b8c0f8"/><path d="M657.3 173.6V503.2" stroke="#f050f0" stroke-width="1"/><path d="M660.9 173.6V503.2" stroke="#d252f0" stroke-width="1.8"/><path d="M669.2 173.6V503.2" stroke="#e644f0" stroke-width="1.4"/><path d="M672.8 173.6V503.2" stroke="#f070f0" stroke-width="1.4"/><ellipse cx="665" cy="174.2" rx="7.500" ry="1.200" fill="#f0a8f0" stroke="#f03cf0" stroke-width=".6"/><circle cx="665" cy="241.1" r="1.800" fill="#5a96f0" opacity=".8"/><circle cx="665" cy="306.6" r="1.800" fill="#5a96f0" opacity=".8"/><circle cx="665" cy="372.1" r="1.800" fill="#5a96f0" opacity=".8"/><circle cx="665" cy="437.6" r="1.800" fill="#5a96f0" opacity=".8"/><rect x="645" y="199" width="40" height="14" fill="#fff" opacity=".55"/><rect x="645" y="264.6" width="40" height="14" fill="#fff" opacity=".55"/><rect x="645" y="330.2" width="40" height="14" fill="#fff" opacity=".55"/><rect x="645" y="395.8" width="40" height="14" fill="#fff" opacity=".55"/><rect x="645" y="461.4" width="40" height="14" fill="#fff" opacity=".55"/><path d="M665 503V474" stroke="#14145a" stroke-width="2.400"/><path d="M661.500 476l3.500-9 3.500 9z" fill="#9a9aa8"/><path d="M665 503l15-7.500" stroke="#18d028" stroke-width="2.400"/><path d="M678 492.500l6.500 0.500-3.500 5.500z" fill="#18c028"/><path d="M665 503.500l27 4" stroke="#e01818" stroke-width="2.400"/><path d="M690.500 504l8.500 4.600-9.500 2.400z" fill="#e01818"/><circle cx="665" cy="503" r="3.400" fill="#f0d020"/><circle cx="664" cy="502" r="1.200" fill="#fff8a0"/><path d="M336 489V458" stroke="#0a0a96" stroke-width="2.600"/><path d="M332.500 461l3.500-9.500 3.500 9.500z" fill="#0a0a96"/><path d="M336 489l15-7" stroke="#18d828" stroke-width="2.600"/><path d="M348 480.500l6-2-2 6.500-5-0.500z" fill="#18c028"/><path d="M336 489l28 4" stroke="#e01010" stroke-width="2.600"/><path d="M361 489.500l9.500 5-9.500 3.500z" fill="#e01010"/><circle cx="336" cy="489.500" r="4" fill="#f0d818"/><circle cx="335" cy="488.500" r="1.500" fill="#fff8a0"/><polygon points="1090,141.3 1124,125.3 1184,134.7 1149.3,150" fill="#8e8e8e" stroke="#7a7575" stroke-width="1.8" stroke-linejoin="round"/><polygon points="1090,141.3 1149.3,150 1149.3,216 1089.6,207.3" fill="#cdcdcd" stroke="#7a7575" stroke-width="1.8" stroke-linejoin="round"/><polygon points="1149.3,150 1184,134.7 1184,202 1149.3,216" fill="#a2a2a2" stroke="#7a7575" stroke-width="1.8" stroke-linejoin="round"/><path d="M1104.41 143.414L1104.11 209.414" stroke="#7a7575" stroke-width="1.7"/><path d="M1133.7 147.712L1133.6 213.712" stroke="#7a7575" stroke-width="1.7"/><path d="M1089.9 158.13L1149.3 166.83" stroke="#7a7575" stroke-width="1.7"/><path d="M1089.7 190.8L1149.3 199.5" stroke="#7a7575" stroke-width="1.7"/><path d="M1158.67 145.869L1158.67 212.22" stroke="#7a7575" stroke-width="1.7"/><path d="M1175.33 138.525L1175.33 205.5" stroke="#7a7575" stroke-width="1.7"/><path d="M1149.3 166.17L1184 151.188" stroke="#7a7575" stroke-width="1.7"/><path d="M1149.3 198.84L1184 184.502" stroke="#7a7575" stroke-width="1.7"/><path d="M1104.41 143.414L1138.58 127.584" stroke="#807c7c" stroke-width="1.2"/><path d="M1133.7 147.712L1168.22 132.228" stroke="#807c7c" stroke-width="1.2"/><path d="M1100.2 136.5L1159.71 145.41" stroke="#807c7c" stroke-width="1"/><path d="M1115.5 129.3L1175.33 138.525" stroke="#807c7c" stroke-width="1"/><path d="M1129 139l7-2 9 1-3 2.500-9 0.500z" fill="#4a4a8a" opacity=".75"/><text x="1111.500" y="185" style="font-family:'Liberation Sans',sans-serif;font-size:12.500px;font-weight:bold" fill="#30c838" textLength="17.500" lengthAdjust="spacingAndGlyphs">+Y</text><text x="0" y="0" style="font-family:'Liberation Sans',sans-serif;font-size:13.500px;font-weight:bold" fill="#e04848" textLength="8.500" lengthAdjust="spacingAndGlyphs" transform="translate(1162,183.500) skewY(-14)" >-X</text></svg>
<span class="t" style="left:645.70px;top:198px;font-size:10.75px;color:#3b463b;letter-spacing:-0.010px;">130.2 lb</span>
<span class="t" style="left:645.70px;top:263px;font-size:10.75px;color:#3b463b;letter-spacing:-0.010px;">130.2 lb</span>
<span class="t" style="left:645.70px;top:329px;font-size:10.75px;color:#3b463b;letter-spacing:-0.010px;">130.2 lb</span>
<span class="t" style="left:645.70px;top:395px;font-size:10.75px;color:#3b463b;letter-spacing:-0.010px;">130.2 lb</span>
<span class="t" style="left:645.70px;top:460px;font-size:10.75px;color:#3b463b;letter-spacing:-0.010px;">130.2 lb</span>
<span class="t" style="left:732.50px;top:176px;font-size:11.25px;color:#3b463b;letter-spacing:-0.009px;">25.00 ft</span>
<span class="t" style="left:732.50px;top:242px;font-size:11.25px;color:#3b463b;letter-spacing:-0.009px;">20.00 ft</span>
<span class="t" style="left:732.50px;top:307px;font-size:11.25px;color:#3b463b;letter-spacing:-0.009px;">15.00 ft</span>
<span class="t" style="left:732.50px;top:373px;font-size:11.25px;color:#3b463b;letter-spacing:-0.009px;">10.00 ft</span>
<span class="t" style="left:732.50px;top:439px;font-size:11.25px;color:#3b463b;letter-spacing:-0.020px;">5.00 ft</span>
<span class="t" style="left:732.50px;top:504px;font-size:11.25px;color:#3b463b;letter-spacing:-0.020px;">0.00 ft</span>
<span class="t" style="left:706.5px;top:208.9px;width:20px;text-align:center;font-size:10.500px;color:#3b463b;transform:rotate(-90deg)">S4</span>
<span class="t" style="left:706.5px;top:274.5px;width:20px;text-align:center;font-size:10.500px;color:#3b463b;transform:rotate(-90deg)">S3</span>
<span class="t" style="left:706.5px;top:340.1px;width:20px;text-align:center;font-size:10.500px;color:#3b463b;transform:rotate(-90deg)">S2</span>
<span class="t" style="left:706.5px;top:405.7px;width:20px;text-align:center;font-size:10.500px;color:#3b463b;transform:rotate(-90deg)">S1</span>
<span class="t" style="left:706.5px;top:471.3px;width:20px;text-align:center;font-size:10.500px;color:#3b463b;transform:rotate(-90deg)">S0</span>
<span class="t" style="left:661.14px;top:447px;font-size:11px;color:#14145a;">Z</span>
<span class="t" style="left:703.83px;top:502px;font-size:11px;color:#e01818;">X</span>
<span class="t" style="left:687.50px;top:485px;font-size:9px;color:#18c028;">Y</span>
<span class="t" style="left:332.64px;top:433px;font-size:11px;color:#0a0a96;">Z</span>
<span class="t" style="left:375.50px;top:488px;font-size:10.5px;color:#e01010;">X</span>
<span class="t" style="left:357.50px;top:470px;font-size:9px;color:#18c028;">Y</span>
<div class="a" style="left:277px;top:622px;width:923px;height:221px;background:#fff;border-left:1px solid #b8b8b8;border-top:1px solid #c8c8c8;border-bottom:1px solid #b4b4b4;"></div>
<div class="a" style="left:278px;top:623px;width:922px;height:8px;background:#e1e1e1;"></div>
<div class="a" style="left:278px;top:631px;width:922px;height:1px;background:#f6f6f6;"></div>
<div class="a" style="left:278px;top:632px;width:60px;height:32px;background:#e4e4e4;"></div>
<div class="a" style="left:338px;top:632px;width:510px;height:32px;background:#f0f0f0;"></div>
<div class="a" style="left:848px;top:632px;width:352px;height:32px;background:#f0f0f0;"></div>
<div class="a" style="left:278px;top:664px;width:60px;height:161px;background:#e4e4e4;"></div>
<div class="a" style="left:278px;top:825px;width:60px;height:17px;background:#f0f0f0;"></div>
<div class="a" style="left:338px;top:664.5px;width:862px;height:16px;background:#fffcf0;border-bottom:1px solid #dfdfdc;"></div>
<div class="a" style="left:278px;top:680px;width:60px;height:1px;background:#eeeeee;"></div>
<div class="a" style="left:338px;top:680.5px;width:862px;height:16px;background:#fffefb;border-bottom:1px solid #dfdfdc;"></div>
<div class="a" style="left:278px;top:696px;width:60px;height:1px;background:#f2f2f2;"></div>
<div class="a" style="left:338px;top:696.5px;width:862px;height:16px;background:#fffcf0;border-bottom:1px solid #dfdfdc;"></div>
<div class="a" style="left:278px;top:712px;width:60px;height:1px;background:#eeeeee;"></div>
<div class="a" style="left:338px;top:712.5px;width:862px;height:16px;background:#fffefb;border-bottom:1px solid #dfdfdc;"></div>
<div class="a" style="left:278px;top:728px;width:60px;height:1px;background:#f2f2f2;"></div>
<div class="a" style="left:338px;top:728.5px;width:862px;height:16px;background:#fffcf0;border-bottom:1px solid #dfdfdc;"></div>
<div class="a" style="left:278px;top:744px;width:60px;height:1px;background:#eeeeee;"></div>
<div class="a" style="left:338px;top:744.5px;width:862px;height:16px;background:#fffefb;border-bottom:1px solid #dfdfdc;"></div>
<div class="a" style="left:278px;top:760px;width:60px;height:1px;background:#f2f2f2;"></div>
<div class="a" style="left:338px;top:760.5px;width:862px;height:16px;background:#fffcf0;border-bottom:1px solid #dfdfdc;"></div>
<div class="a" style="left:278px;top:776px;width:60px;height:1px;background:#eeeeee;"></div>
<div class="a" style="left:338px;top:776.5px;width:862px;height:16px;background:#fffefb;border-bottom:1px solid #dfdfdc;"></div>
<div class="a" style="left:278px;top:792px;width:60px;height:1px;background:#f2f2f2;"></div>
<div class="a" style="left:338px;top:792.5px;width:862px;height:16px;background:#fffcf0;border-bottom:1px solid #dfdfdc;"></div>
<div class="a" style="left:278px;top:808px;width:60px;height:1px;background:#eeeeee;"></div>
<div class="a" style="left:338px;top:808.5px;width:862px;height:16px;background:#fffefb;border-bottom:1px solid #dfdfdc;"></div>
<div class="a" style="left:278px;top:824px;width:60px;height:1px;background:#f2f2f2;"></div>
<div class="a" style="left:338px;top:824.5px;width:862px;height:1px;background:#d0d0d0;"></div>
<div class="a" style="left:337px;top:623px;width:1px;height:8px;background:#f6f6f6;"></div>
<div class="a" style="left:422px;top:623px;width:1px;height:8px;background:#f6f6f6;"></div>
<div class="a" style="left:507px;top:623px;width:1px;height:8px;background:#f6f6f6;"></div>
<div class="a" style="left:592px;top:623px;width:1px;height:8px;background:#f6f6f6;"></div>
<div class="a" style="left:677px;top:623px;width:1px;height:8px;background:#f6f6f6;"></div>
<div class="a" style="left:762px;top:623px;width:1px;height:8px;background:#f6f6f6;"></div>
<div class="a" style="left:847px;top:623px;width:1px;height:8px;background:#f6f6f6;"></div>
<div class="a" style="left:337px;top:632px;width:1px;height:32px;background:#fbfbfb;"></div>
<div class="a" style="left:592px;top:632px;width:1px;height:32px;background:#fbfbfb;"></div>
<div class="a" style="left:847px;top:632px;width:1px;height:32px;background:#fbfbfb;"></div>
<div class="a" style="left:422px;top:648px;width:1px;height:16px;background:#dcdcdc;"></div>
<div class="a" style="left:507px;top:648px;width:1px;height:16px;background:#dcdcdc;"></div>
<div class="a" style="left:677px;top:648px;width:1px;height:16px;background:#dcdcdc;"></div>
<div class="a" style="left:762px;top:648px;width:1px;height:16px;background:#dcdcdc;"></div>
<div class="a" style="left:337px;top:664px;width:1px;height:161px;background:#e0e0e0;"></div>
<div class="a" style="left:422px;top:664px;width:1px;height:161px;background:#e0e0e0;"></div>
<div class="a" style="left:507px;top:664px;width:1px;height:161px;background:#e0e0e0;"></div>
<div class="a" style="left:592px;top:664px;width:1px;height:161px;background:#e0e0e0;"></div>
<div class="a" style="left:677px;top:664px;width:1px;height:161px;background:#e0e0e0;"></div>
<div class="a" style="left:762px;top:664px;width:1px;height:161px;background:#e0e0e0;"></div>
<div class="a" style="left:847px;top:664px;width:1px;height:161px;background:#e0e0e0;"></div>
<div class="a" style="left:278px;top:664px;width:922px;height:1px;background:#d4d4d4;"></div>
<span class="t" style="left:294.08px;top:635px;font-size:11.5px;color:#111;">Story</span>
<span class="t" style="left:298.55px;top:649px;font-size:11.5px;color:#111;">No.</span>
<span class="t" style="left:431.25px;top:632px;font-size:11.25px;color:#111;letter-spacing:0.054px;">Displacement</span>
<span class="t" style="left:683.00px;top:632px;font-size:12px;color:#111;letter-spacing:-0.022px;">Interstory Drift</span>
<span class="t" style="left:340.5px;top:648px;width:80px;text-align:center;font-size:11.500px;color:#111">u<span style="font-size:9px">X</span> [in]</span>
<span class="t" style="left:425.5px;top:648px;width:80px;text-align:center;font-size:11.500px;color:#111">u<span style="font-size:9px">Y</span> [in]</span>
<span class="t" style="left:510.5px;top:648px;width:80px;text-align:center;font-size:11.500px;color:#111">φ<span style="font-size:9px">Z</span> [mrad]</span>
<span class="t" style="left:595.5px;top:648px;width:80px;text-align:center;font-size:11.500px;color:#111">Δu<span style="font-size:9px">X</span> [in]</span>
<span class="t" style="left:680.5px;top:648px;width:80px;text-align:center;font-size:11.500px;color:#111">Δu<span style="font-size:9px">Y</span> [in]</span>
<span class="t" style="left:765.5px;top:648px;width:80px;text-align:center;font-size:11.500px;color:#111">Δφ<span style="font-size:9px">Z</span> [mrad]</span>
<div class="a" style="left:374.2px;top:667px;width:31px;height:11px;background:#f6b4b8;"></div>
<div class="a" style="left:629.2px;top:667px;width:31px;height:11px;background:#f6b4b8;"></div>
<span class="t" style="left:304.30px;top:665px;font-size:11.5px;">4</span>
<span class="t" style="left:379.20px;top:665px;font-size:10.5px;letter-spacing:0.045px;">0.994</span>
<span class="t" style="left:464.00px;top:665px;font-size:10.5px;letter-spacing:0.045px;">0.000</span>
<span class="t" style="left:561.00px;top:665px;font-size:10.5px;letter-spacing:-0.032px;">0.0</span>
<span class="t" style="left:634.20px;top:665px;font-size:10.5px;letter-spacing:0.045px;">0.281</span>
<span class="t" style="left:719.00px;top:665px;font-size:10.5px;letter-spacing:0.045px;">0.000</span>
<span class="t" style="left:816.00px;top:665px;font-size:10.5px;letter-spacing:-0.032px;">0.0</span>
<div class="a" style="left:343.2px;top:683px;width:31px;height:11px;background:#d9e2fa;"></div>
<div class="a" style="left:598.2px;top:683px;width:31px;height:11px;background:#d9e2fa;"></div>
<span class="t" style="left:375.50px;top:681px;font-size:10.75px;letter-spacing:-0.024px;">-0.994</span>
<span class="t" style="left:464.00px;top:681px;font-size:10.5px;letter-spacing:0.045px;">0.000</span>
<span class="t" style="left:561.00px;top:681px;font-size:10.5px;letter-spacing:-0.032px;">0.0</span>
<span class="t" style="left:630.50px;top:681px;font-size:10.75px;letter-spacing:-0.024px;">-0.281</span>
<span class="t" style="left:719.00px;top:681px;font-size:10.5px;letter-spacing:0.045px;">0.000</span>
<span class="t" style="left:816.00px;top:681px;font-size:10.5px;letter-spacing:-0.032px;">0.0</span>
<div class="a" style="left:374.2px;top:699px;width:22.2676px;height:11px;background:#f6b4b8;"></div>
<div class="a" style="left:629.2px;top:699px;width:29.2349px;height:11px;background:#f6b4b8;"></div>
<span class="t" style="left:304.30px;top:697px;font-size:11.5px;">3</span>
<span class="t" style="left:379.20px;top:697px;font-size:10.5px;letter-spacing:0.045px;">0.714</span>
<span class="t" style="left:464.00px;top:697px;font-size:10.5px;letter-spacing:0.045px;">0.000</span>
<span class="t" style="left:561.00px;top:697px;font-size:10.5px;letter-spacing:-0.032px;">0.0</span>
<span class="t" style="left:634.20px;top:697px;font-size:10.5px;letter-spacing:0.045px;">0.265</span>
<span class="t" style="left:719.00px;top:697px;font-size:10.5px;letter-spacing:0.045px;">0.000</span>
<span class="t" style="left:816.00px;top:697px;font-size:10.5px;letter-spacing:-0.032px;">0.0</span>
<div class="a" style="left:351.932px;top:715px;width:22.2676px;height:11px;background:#d9e2fa;"></div>
<div class="a" style="left:599.965px;top:715px;width:29.2349px;height:11px;background:#d9e2fa;"></div>
<span class="t" style="left:375.50px;top:713px;font-size:10.75px;letter-spacing:-0.024px;">-0.714</span>
<span class="t" style="left:464.00px;top:713px;font-size:10.5px;letter-spacing:0.045px;">0.000</span>
<span class="t" style="left:561.00px;top:713px;font-size:10.5px;letter-spacing:-0.032px;">0.0</span>
<span class="t" style="left:630.50px;top:713px;font-size:10.75px;letter-spacing:-0.024px;">-0.265</span>
<span class="t" style="left:719.00px;top:713px;font-size:10.5px;letter-spacing:0.045px;">0.000</span>
<span class="t" style="left:816.00px;top:713px;font-size:10.5px;letter-spacing:-0.032px;">0.0</span>
<div class="a" style="left:374.2px;top:731px;width:14.003px;height:11px;background:#f6b4b8;"></div>
<div class="a" style="left:629.2px;top:731px;width:25.0427px;height:11px;background:#f6b4b8;"></div>
<span class="t" style="left:304.30px;top:729px;font-size:11.5px;">2</span>
<span class="t" style="left:379.20px;top:729px;font-size:10.5px;letter-spacing:0.045px;">0.449</span>
<span class="t" style="left:464.00px;top:729px;font-size:10.5px;letter-spacing:0.045px;">0.000</span>
<span class="t" style="left:561.00px;top:729px;font-size:10.5px;letter-spacing:-0.032px;">0.0</span>
<span class="t" style="left:634.20px;top:729px;font-size:10.5px;letter-spacing:0.045px;">0.227</span>
<span class="t" style="left:719.00px;top:729px;font-size:10.5px;letter-spacing:0.045px;">0.000</span>
<span class="t" style="left:816.00px;top:729px;font-size:10.5px;letter-spacing:-0.032px;">0.0</span>
<div class="a" style="left:360.197px;top:747px;width:14.003px;height:11px;background:#d9e2fa;"></div>
<div class="a" style="left:604.157px;top:747px;width:25.0427px;height:11px;background:#d9e2fa;"></div>
<span class="t" style="left:375.50px;top:745px;font-size:10.75px;letter-spacing:-0.024px;">-0.449</span>
<span class="t" style="left:464.00px;top:745px;font-size:10.5px;letter-spacing:0.045px;">0.000</span>
<span class="t" style="left:561.00px;top:745px;font-size:10.5px;letter-spacing:-0.032px;">0.0</span>
<span class="t" style="left:630.50px;top:745px;font-size:10.75px;letter-spacing:-0.024px;">-0.227</span>
<span class="t" style="left:719.00px;top:745px;font-size:10.5px;letter-spacing:0.045px;">0.000</span>
<span class="t" style="left:816.00px;top:745px;font-size:10.5px;letter-spacing:-0.032px;">0.0</span>
<div class="a" style="left:374.2px;top:763px;width:6.92354px;height:11px;background:#f6b4b8;"></div>
<div class="a" style="left:629.2px;top:763px;width:17.7616px;height:11px;background:#f6b4b8;"></div>
<span class="t" style="left:304.30px;top:761px;font-size:11.5px;">1</span>
<span class="t" style="left:379.20px;top:761px;font-size:10.5px;letter-spacing:0.045px;">0.222</span>
<span class="t" style="left:464.00px;top:761px;font-size:10.5px;letter-spacing:0.045px;">0.000</span>
<span class="t" style="left:561.00px;top:761px;font-size:10.5px;letter-spacing:-0.032px;">0.0</span>
<span class="t" style="left:634.20px;top:761px;font-size:10.5px;letter-spacing:0.045px;">0.161</span>
<span class="t" style="left:719.00px;top:761px;font-size:10.5px;letter-spacing:0.045px;">0.000</span>
<span class="t" style="left:816.00px;top:761px;font-size:10.5px;letter-spacing:-0.032px;">0.0</span>
<div class="a" style="left:367.276px;top:779px;width:6.92354px;height:11px;background:#d9e2fa;"></div>
<div class="a" style="left:611.438px;top:779px;width:17.7616px;height:11px;background:#d9e2fa;"></div>
<span class="t" style="left:375.50px;top:777px;font-size:10.75px;letter-spacing:-0.024px;">-0.222</span>
<span class="t" style="left:464.00px;top:777px;font-size:10.5px;letter-spacing:0.045px;">0.000</span>
<span class="t" style="left:561.00px;top:777px;font-size:10.5px;letter-spacing:-0.032px;">0.0</span>
<span class="t" style="left:630.50px;top:777px;font-size:10.75px;letter-spacing:-0.024px;">-0.161</span>
<span class="t" style="left:719.00px;top:777px;font-size:10.5px;letter-spacing:0.045px;">0.000</span>
<span class="t" style="left:816.00px;top:777px;font-size:10.5px;letter-spacing:-0.032px;">0.0</span>
<div class="a" style="left:374.2px;top:795px;width:1.9336px;height:11px;background:#f6b4b8;"></div>
<div class="a" style="left:629.2px;top:795px;width:6.83986px;height:11px;background:#f6b4b8;"></div>
<span class="t" style="left:304.30px;top:793px;font-size:11.5px;">0</span>
<span class="t" style="left:379.20px;top:793px;font-size:10.5px;letter-spacing:0.045px;">0.062</span>
<span class="t" style="left:464.00px;top:793px;font-size:10.5px;letter-spacing:0.045px;">0.000</span>
<span class="t" style="left:561.00px;top:793px;font-size:10.5px;letter-spacing:-0.032px;">0.0</span>
<span class="t" style="left:634.20px;top:793px;font-size:10.5px;letter-spacing:0.045px;">0.062</span>
<span class="t" style="left:719.00px;top:793px;font-size:10.5px;letter-spacing:0.045px;">0.000</span>
<span class="t" style="left:816.00px;top:793px;font-size:10.5px;letter-spacing:-0.032px;">0.0</span>
<div class="a" style="left:372.266px;top:811px;width:1.9336px;height:11px;background:#d9e2fa;"></div>
<div class="a" style="left:622.36px;top:811px;width:6.83986px;height:11px;background:#d9e2fa;"></div>
<span class="t" style="left:375.50px;top:809px;font-size:10.75px;letter-spacing:-0.024px;">-0.062</span>
<span class="t" style="left:464.00px;top:809px;font-size:10.5px;letter-spacing:0.045px;">0.000</span>
<span class="t" style="left:561.00px;top:809px;font-size:10.5px;letter-spacing:-0.032px;">0.0</span>
<span class="t" style="left:630.50px;top:809px;font-size:10.75px;letter-spacing:-0.024px;">-0.062</span>
<span class="t" style="left:719.00px;top:809px;font-size:10.5px;letter-spacing:0.045px;">0.000</span>
<span class="t" style="left:816.00px;top:809px;font-size:10.5px;letter-spacing:-0.032px;">0.0</span>
<div class="a" style="left:339px;top:665px;width:83px;height:15px;border:1px dotted #111;"></div>
<div class="a" style="left:402.5px;top:843px;width:77px;height:20px;background:#ececec;border:1px solid #cfcfcf;border-top:none;"></div>
<div class="a" style="left:581px;top:843px;width:161px;height:20px;background:#ececec;border:1px solid #cfcfcf;border-top:none;"></div>
<div class="a" style="left:744px;top:843px;width:132px;height:20px;background:#ececec;border:1px solid #cfcfcf;border-top:none;"></div>
<div class="a" style="left:481px;top:842px;width:98px;height:23px;background:#fff;border:1px solid #cfcfcf;border-top:none;"></div>
<span class="t" style="left:411.50px;top:845px;font-size:11.5px;letter-spacing:-0.047px;">Story Actions</span>
<span class="t" style="left:494.00px;top:846px;font-size:11.75px;letter-spacing:0.011px;">Interstory Drifts</span>
<span class="t" style="left:590.50px;top:845px;font-size:11.5px;letter-spacing:-0.018px;">Centers of Mass and Rigidity</span>
<span class="t" style="left:753.50px;top:845px;font-size:11.5px;letter-spacing:-0.014px;">Sensitivity Coefficients</span>
<span class="t" style="left:324.50px;top:846px;font-size:11.5px;letter-spacing:0.038px;">2 of 4</span>
<svg class="a" style="left:280px;top:847px;" width="120" height="13" viewBox="0 0 120 13"><path d="M3 2v9" stroke="#555" stroke-width="1.400"/><path d="M9.500 2.500v8l-5-4z" fill="#555"/><path d="M26.500 2.500v8l-5-4z" fill="#555"/><path d="M94 2.500v8l5-4z" fill="#555"/><path d="M110 2.500v8l5-4z" fill="#555"/><path d="M116.500 2v9" stroke="#555" stroke-width="1.400"/></svg>
<svg class="a" style="left:5px;top:51px;" width="3" height="20" viewBox="0 0 3 20"><rect x="0" y="0" width="1.500" height="1.500" fill="#b4b4b4"/><rect x="0.800" y="1" width="1" height="1" fill="#e8e8e8"/><rect x="0" y="4" width="1.500" height="1.500" fill="#b4b4b4"/><rect x="0.800" y="5" width="1" height="1" fill="#e8e8e8"/><rect x="0" y="8" width="1.500" height="1.500" fill="#b4b4b4"/><rect x="0.800" y="9" width="1" height="1" fill="#e8e8e8"/><rect x="0" y="12" width="1.500" height="1.500" fill="#b4b4b4"/><rect x="0.800" y="13" width="1" height="1" fill="#e8e8e8"/><rect x="0" y="16" width="1.500" height="1.500" fill="#b4b4b4"/><rect x="0.800" y="17" width="1" height="1" fill="#e8e8e8"/></svg>
<svg class="a" style="left:14px;top:51.7px;" width="18" height="18" viewBox="0 0 18 18"><path d="M5 2h7l4 4v10h-11z" fill="#fff" stroke="#555" stroke-width="1"/><path d="M12 2v4h4" fill="none" stroke="#555" stroke-width=".9"/><path d="M4 12l6-5 6 4-5 4z" fill="#4a7cc0"/><path d="M6 11.500l4-3 4 2.500" stroke="#bcd4ee" stroke-width="1" fill="none"/><polygon points="5.00,-0.43 5.98,2.64 8.07,1.93 7.36,4.02 10.43,5.00 7.36,5.98 8.07,8.07 5.98,7.36 5.00,10.43 4.02,7.36 1.93,8.07 2.64,5.98 -0.43,5.00 2.64,4.02 1.93,1.93 4.02,2.64" fill="#f2ea00" stroke="#a8a468" stroke-width=".45" stroke-linejoin="round"/><circle cx="5" cy="5" r="2.71" fill="#f6f000"/></svg>
<svg class="a" style="left:40px;top:51.7px;" width="18" height="18" viewBox="0 0 18 18"><path d="M1.500 6.500q0-1 1-1h4.500l1.500 1.500h7q1 0 1 1v9.500h-15z" fill="#f2e8a0" stroke="#cfc070" stroke-width=".9"/><path d="M0.500 9q-.2-1 .8-1h12.500q1 0 1.100 1l.9 8q.1 1-1 1h-12q-1 0-1.200-1z" fill="#f8f0b4" stroke="#cfc070" stroke-width=".9"/><path d="M12.800 9v-4.200h-2.400l3.900-4 3.900 4h-2.400v4.200z" fill="#0a9a48"/></svg>
<svg class="a" style="left:65.5px;top:51.7px;" width="18" height="18" viewBox="0 0 18 18"><path d="M2.500 1.500h5.500c5 0 7.500 3.500 7.500 7.500s-2.500 7.500-7.500 7.500h-5.500z" fill="#08b0e8"/><path d="M10.800 6.800a3 3 0 1 0 0 4.400" fill="none" stroke="#fff" stroke-width="1.800"/></svg>
<svg class="a" style="left:92px;top:51.7px;" width="18" height="18" viewBox="0 0 18 18"><path d="M0.500 0.500h4.500c4 0 6 2.500 6 5.500h-6v7.500h-4.500z" fill="#08b0e8"/><path d="M7.500 6.500a2.200 2.200 0 1 0 0 3.400" fill="none" stroke="#fff" stroke-width="1.300"/><path d="M5.500 9l6-3 6 3v6l-6 3-6-3z" fill="#28c0f0" stroke="#08a0d8" stroke-width=".7"/><path d="M5.500 9l6 3 6-3M11.500 12v6M8.500 7.500l6 3v6M14.500 7.500l-6 3v6M5.500 12l6 3 6-3" fill="none" stroke="#d0f0fc" stroke-width=".7"/></svg>
<svg class="a" style="left:118px;top:51.7px;" width="18" height="18" viewBox="0 0 18 18"><rect x="1" y="6.500" width="16" height="11" fill="#f0f0f0" stroke="#666" stroke-width="1"/><rect x="1" y="6.500" width="16" height="2.800" fill="#3a5cc0"/><path d="M3 12h2M3 14.500h2M6.500 12h8.500M6.500 14.500h8.500" stroke="#777" stroke-width="1.300"/><path d="M2.500 6c1-3 4-4.500 7-4.500l5 1c1.500.5 1.500 2 0 2.500l-3 .5c2 1 1 3-1 3l-5-.5c-2 0-3-1-3-2z" fill="#e8c8a8" stroke="#a08060" stroke-width=".7"/><path d="M13 2l4-1.500v5l-3 1z" fill="#3a5cc0"/></svg>
<svg class="a" style="left:144px;top:51.7px;" width="18" height="18" viewBox="0 0 18 18"><path d="M1 1h14l2 2v14h-16z" fill="#5c5c5c"/><rect x="3.500" y="1" width="10" height="6.500" fill="#e8e8e8"/><path d="M4.500 2.800h8M4.500 4.300h8M4.500 5.800h8" stroke="#8a8a8a" stroke-width=".8"/><rect x="5" y="11" width="8" height="6" fill="#e8e8e8"/><rect x="6.500" y="12" width="2.500" height="5" fill="#5c5c5c"/></svg>
<svg class="a" style="left:170px;top:51.7px;" width="18" height="18" viewBox="0 0 18 18"><rect x="4.500" y="1" width="9" height="5" fill="#6a6a6a"/><rect x="0.500" y="6" width="17" height="8" rx="1.500" fill="#6a6a6a"/><rect x="4" y="10.500" width="10" height="6.500" fill="#f0f0f0" stroke="#6a6a6a" stroke-width="1"/><path d="M5.500 13h7M5.500 15h7" stroke="#9a9a9a" stroke-width=".8"/><circle cx="15" cy="8.500" r=".9" fill="#e8e8e8"/></svg>
<svg class="a" style="left:193.8px;top:58.7px;" width="7.4" height="4.2" viewBox="0 0 7.4 4.2"><path d="M0 0h7.400l-3.700 4.200z" fill="#111"/></svg>
<svg class="a" style="left:208px;top:51.7px;" width="18" height="18" viewBox="0 0 18 18"><path d="M3 1h9l4 4v12h-13z" fill="#fff" stroke="#555" stroke-width="1"/><path d="M12 1v4h4" fill="none" stroke="#555" stroke-width=".9"/><path d="M5 7h9" stroke="#999" stroke-width="1.100"/><path d="M5 9.5h9" stroke="#999" stroke-width="1.100"/><path d="M5 12h9" stroke="#999" stroke-width="1.100"/><path d="M5 14.5h9" stroke="#999" stroke-width="1.100"/><polygon points="4.50,-0.66 5.52,2.54 7.70,1.80 6.96,3.98 10.16,5.00 6.96,6.02 7.70,8.20 5.52,7.46 4.50,10.66 3.48,7.46 1.30,8.20 2.04,6.02 -1.16,5.00 2.04,3.98 1.30,1.80 3.48,2.54" fill="#f2ea00" stroke="#a8a468" stroke-width=".45" stroke-linejoin="round"/><circle cx="4.5" cy="5" r="2.83" fill="#f6f000"/></svg>
<svg class="a" style="left:235.5px;top:51.7px;" width="18" height="18" viewBox="0 0 18 18"><path d="M2.5 1h9l4 4v12h-13z" fill="#fff" stroke="#666" stroke-width="1"/><path d="M11.5 1v4h4" fill="none" stroke="#666" stroke-width=".9"/><path d="M4.5 7h9" stroke="#999" stroke-width="1.100"/><path d="M4.5 9.5h9" stroke="#999" stroke-width="1.100"/><path d="M4.5 12h9" stroke="#999" stroke-width="1.100"/><path d="M4.5 14.5h9" stroke="#999" stroke-width="1.100"/></svg>
<div class="a" style="left:259px;top:51px;width:1px;height:20px;background:#a8a8a8;"></div>
<svg class="a" style="left:266.5px;top:51.7px;" width="18" height="18" viewBox="0 0 18 18"><path d="M3 10c2-5 9-6 13 1" fill="none" stroke="#6e6e6e" stroke-width="2.400"/><path d="M1 4.500l1 8 7-2.500z" fill="#6e6e6e"/></svg>
<svg class="a" style="left:290.8px;top:58.7px;" width="7.4" height="4.2" viewBox="0 0 7.4 4.2"><path d="M0 0h7.400l-3.700 4.200z" fill="#111"/></svg>
<svg class="a" style="left:305px;top:51.7px;" width="18" height="18" viewBox="0 0 18 18"><path d="M15 10c-2-5-9-6-13 1" fill="none" stroke="#b4b4b4" stroke-width="2.400"/><path d="M17 4.500l-1 8-7-2.500z" fill="#b4b4b4"/></svg>
<svg class="a" style="left:328.8px;top:58.7px;" width="7.4" height="4.2" viewBox="0 0 7.4 4.2"><path d="M0 0h7.400l-3.700 4.200z" fill="#999"/></svg>
<div class="a" style="left:342px;top:51px;width:1px;height:20px;background:#a8a8a8;"></div>
<div class="a" style="left:347.5px;top:48.5px;width:24.5px;height:23px;background:#cce4f8;border:1px solid #98c8f0;border-radius:3px;"></div>
<div class="a" style="left:373px;top:48.5px;width:24.3px;height:23px;background:#cce4f8;border:1px solid #98c8f0;border-radius:3px;"></div>
<svg class="a" style="left:351px;top:51.7px;" width="18" height="18" viewBox="0 0 18 18"><rect x="3.700" y="1" width="10.600" height="16.500" fill="#cfcfcf" stroke="#4c4c4c" stroke-width="1.400"/><rect x="4.4" y="1.7" width="9.2" height="2.400" fill="#3454c8"/><rect x="5.2" y="2.3" width="1.500" height="1.200" fill="#fff"/><path d="M5 6h8M5 8.500h8M5 11h8M5 13.500h8" stroke="#fff" stroke-width="1.300"/><path d="M8.500 6h4.500M8.500 8.500h4.500M8.500 11h4.500M8.500 13.500h4.500" stroke="#555" stroke-width="1.100"/><path d="M5 16h8" stroke="#555" stroke-width="1.200"/></svg>
<svg class="a" style="left:376px;top:51.7px;" width="18" height="18" viewBox="0 0 18 18"><rect x="0.700" y="1" width="16.600" height="16.500" fill="#bdbdbd" stroke="#4c4c4c" stroke-width="1.400"/><rect x="1.4" y="1.7" width="15.2" height="2.400" fill="#3454c8"/><rect x="2.2" y="2.3" width="1.500" height="1.200" fill="#fff"/><path d="M2 6.500h14M2 9.500h14M2 12.500h14M2 15.300h14" stroke="#e4e4e4" stroke-width="1.700"/><path d="M5.500 5v11.500M9.500 5v11.500M13.500 5v11.500" stroke="#bdbdbd" stroke-width="1"/></svg>
<svg class="a" style="left:403px;top:51.7px;" width="18" height="18" viewBox="0 0 18 18"><rect x="3.500" y="1" width="10" height="16" fill="#d8d8d8" stroke="#b0b0b0" stroke-width="1"/><rect x="3.500" y="1" width="10" height="2.200" fill="#a8a8a8"/><path d="M5 5.500h7.500M5 8h7.500M5 10.500h7.500M5 13h7.500" stroke="#fff" stroke-width="1.300"/><path d="M8 3.500v12" stroke="#c4c4c4" stroke-width="1"/><path d="M8 15.500h6v2h-6z" fill="#b8b8b8"/></svg>
<svg class="a" style="left:428px;top:51.7px;" width="18" height="18" viewBox="0 0 18 18"><rect x="0.700" y="0.700" width="16.600" height="16.800" fill="#dedede" stroke="#4c4c4c" stroke-width="1.400"/><rect x="1.4" y="1.4" width="15.2" height="2.400" fill="#3454c8"/><rect x="2.2" y="2" width="1.500" height="1.200" fill="#fff"/><path d="M2.500 5l3.500 2.200-3.500 2.200M7 5l3.500 2.200-3.500 2.200M11 10.500h4" fill="none" stroke="#111" stroke-width="1.600"/></svg>
<svg class="a" style="left:454px;top:51.7px;" width="18" height="18" viewBox="0 0 18 18"><rect x="4" y="0.700" width="10.500" height="9" fill="#d8d8d8" stroke="#666" stroke-width="1.200"/><rect x="4.600" y="1.300" width="9.300" height="2.200" fill="#4a64c8"/><path d="M6 5.500h6.500M6 7.500h6.500" stroke="#fff" stroke-width="1.200"/><rect x="0" y="8.500" width="18" height="9.500" rx="2.500" fill="#c0c0c0"/></svg>
<span class="t" style="left:455.20px;top:57px;font-size:7.5px;font-weight:bold;color:#111;letter-spacing:0.067px;">&gt;SC</span>
<svg class="a" style="left:480px;top:51.7px;" width="18" height="18" viewBox="0 0 18 18"><rect x="3.700" y="0.700" width="10.600" height="16.800" fill="#cfcfcf" stroke="#4c4c4c" stroke-width="1.400"/><rect x="4.4" y="1.4" width="9.2" height="2.400" fill="#3454c8"/><rect x="5.2" y="2" width="1.500" height="1.200" fill="#fff"/><rect x="4.500" y="4.700" width="9" height="2.300" fill="#9ec0f0" stroke="#4a74d8" stroke-width=".6"/><path d="M5 8.700h8M5 10.700h8" stroke="#fff" stroke-width="1.200"/><path d="M8.500 8.700h4.500M8.500 10.700h4.500" stroke="#444" stroke-width="1.100"/><rect x="4.500" y="12" width="9" height="1.200" fill="#4a74d8"/><path d="M5 15h8" stroke="#999" stroke-width="1.300"/></svg>
<div class="a" style="left:502.5px;top:48px;width:1px;height:27px;background:#e0e0e0;"></div>
<svg class="a" style="left:508px;top:51px;" width="3" height="20" viewBox="0 0 3 20"><rect x="0" y="0" width="1.500" height="1.500" fill="#b4b4b4"/><rect x="0.800" y="1" width="1" height="1" fill="#e8e8e8"/><rect x="0" y="4" width="1.500" height="1.500" fill="#b4b4b4"/><rect x="0.800" y="5" width="1" height="1" fill="#e8e8e8"/><rect x="0" y="8" width="1.500" height="1.500" fill="#b4b4b4"/><rect x="0.800" y="9" width="1" height="1" fill="#e8e8e8"/><rect x="0" y="12" width="1.500" height="1.500" fill="#b4b4b4"/><rect x="0.800" y="13" width="1" height="1" fill="#e8e8e8"/><rect x="0" y="16" width="1.500" height="1.500" fill="#b4b4b4"/><rect x="0.800" y="17" width="1" height="1" fill="#e8e8e8"/></svg>
<svg class="a" style="left:517px;top:51.7px;" width="18" height="18" viewBox="0 0 18 18"><path d="M6 3h10l-4.500 12.500h-10z" fill="#f2e45c" stroke="#555" stroke-width="1"/><circle cx="6" cy="3" r="1.4" fill="#e8101c"/><circle cx="16" cy="3" r="1.4" fill="#e8101c"/><circle cx="1.5" cy="15.5" r="1.4" fill="#e8101c"/><circle cx="11.5" cy="15.5" r="1.4" fill="#e8101c"/><path d="M11 8l0 8 2-1.800 1.500 3 1.300-.6-1.500-3 2.700-.1z" fill="#fff" stroke="#666" stroke-width=".7"/></svg>
<svg class="a" style="left:540.3px;top:58.7px;" width="7.4" height="4.2" viewBox="0 0 7.4 4.2"><path d="M0 0h7.400l-3.700 4.200z" fill="#111"/></svg>
<svg class="a" style="left:555px;top:51.7px;" width="18" height="18" viewBox="0 0 18 18"><rect x="1" y="2.500" width="16" height="13" rx="2.500" fill="#f2e45c" stroke="#555" stroke-width="1.200"/><path d="M4 7h5M6.500 4.500v5M4 12.500h5" stroke="#111" stroke-width="1.600"/><path d="M11.5 6.5l0 8 2-1.800 1.500 3 1.300-.6-1.500-3 2.700-.1z" fill="#fff" stroke="#666" stroke-width=".7"/></svg>
<div class="a" style="left:577.5px;top:48px;width:1px;height:27px;background:#e0e0e0;"></div>
<svg class="a" style="left:583px;top:51px;" width="3" height="20" viewBox="0 0 3 20"><rect x="0" y="0" width="1.500" height="1.500" fill="#b4b4b4"/><rect x="0.800" y="1" width="1" height="1" fill="#e8e8e8"/><rect x="0" y="4" width="1.500" height="1.500" fill="#b4b4b4"/><rect x="0.800" y="5" width="1" height="1" fill="#e8e8e8"/><rect x="0" y="8" width="1.500" height="1.500" fill="#b4b4b4"/><rect x="0.800" y="9" width="1" height="1" fill="#e8e8e8"/><rect x="0" y="12" width="1.500" height="1.500" fill="#b4b4b4"/><rect x="0.800" y="13" width="1" height="1" fill="#e8e8e8"/><rect x="0" y="16" width="1.500" height="1.500" fill="#b4b4b4"/><rect x="0.800" y="17" width="1" height="1" fill="#e8e8e8"/></svg>
<svg class="a" style="left:592px;top:51.7px;" width="18" height="18" viewBox="0 0 18 18"><path d="M6 2v9" stroke="#5b8fd8" stroke-width="2.200"/><path d="M2.500 9.500l3.500 5 3.500-5z" fill="#5b8fd8"/><path d="M0.500 16.500h17" stroke="#333" stroke-width="1.600"/><rect x="8" y="0.5" width="9.5" height="7" fill="#f2f2f2" stroke="#777" stroke-width=".9"/><rect x="8" y="0.5" width="9.5" height="2.200" fill="#2a48b8"/><polygon points="3.50,-0.46 4.39,2.35 6.30,1.70 5.65,3.61 8.46,4.50 5.65,5.39 6.30,7.30 4.39,6.65 3.50,9.46 2.61,6.65 0.70,7.30 1.35,5.39 -1.46,4.50 1.35,3.61 0.70,1.70 2.61,2.35" fill="#f2ea00" stroke="#a8a468" stroke-width=".45" stroke-linejoin="round"/><circle cx="3.5" cy="4.5" r="2.48" fill="#f6f000"/></svg>
<svg class="a" style="left:618px;top:51.7px;" width="18" height="18" viewBox="0 0 18 18"><path d="M6 2v9" stroke="#5b8fd8" stroke-width="2.200"/><path d="M2.500 9.500l3.500 5 3.500-5z" fill="#5b8fd8"/><path d="M0.500 16.500h17" stroke="#333" stroke-width="1.600"/><rect x="8" y="0.5" width="9.5" height="7" fill="#f2f2f2" stroke="#777" stroke-width=".9"/><rect x="8" y="0.5" width="9.5" height="2.200" fill="#2a48b8"/></svg>
<div class="a" style="left:641px;top:50.5px;width:155px;height:20.5px;background:#e6e8f4;"></div>
<div class="a" style="left:646px;top:55.5px;width:11px;height:10.5px;background:#3a600c;"></div>
<div class="a" style="left:660px;top:55.5px;width:11px;height:10.5px;background:#c4fcfc;"></div>
<div class="a" style="left:674px;top:54px;width:30px;height:13px;background:#9c5620;"></div>
<span class="t" style="left:682.50px;top:53px;font-size:10px;color:#fff;letter-spacing:-0.170px;">Qe</span>
<span class="t" style="left:709.00px;top:53px;font-size:10px;color:#101030;letter-spacing:-0.115px;">LC5</span>
<div class="a" style="left:738px;top:51px;width:1px;height:19.5px;background:#f4f4fa;"></div>
<span class="t" style="left:745.00px;top:52px;font-size:10.25px;color:#101030;letter-spacing:0.036px;">RSA ...</span>
<svg class="a" style="left:782px;top:58px;" width="10" height="6" viewBox="0 0 10 6"><path d="M0.700 0.700l4.300 4.300 4.300-4.300" fill="none" stroke="#444" stroke-width="1.100"/></svg>
<div class="a" style="left:797px;top:50.5px;width:15px;height:20.5px;background:#e6e8f4;"></div>
<div class="a" style="left:813px;top:50.5px;width:15px;height:20.5px;background:#e6e8f4;"></div>
<svg class="a" style="left:801px;top:57px;" width="6" height="8" viewBox="0 0 6 8"><path d="M5.500 0v8l-5-4z" fill="#111"/></svg>
<svg class="a" style="left:818px;top:57px;" width="6" height="8" viewBox="0 0 6 8"><path d="M0.500 0v8l5-4z" fill="#111"/></svg>
<svg class="a" style="left:832px;top:51.7px;" width="18" height="18" viewBox="0 0 18 18"><path d="M0.500 3.500h13l-5 6v6.500l-3-2v-4.500z" fill="#5b8fd8"/><path d="M9.500 0.500l7 7M16.500 0.500l-7 7" stroke="#e8101c" stroke-width="2.400"/></svg>
<svg class="a" style="left:855.8px;top:58.7px;" width="7.4" height="4.2" viewBox="0 0 7.4 4.2"><path d="M0 0h7.400l-3.700 4.200z" fill="#111"/></svg>
<svg class="a" style="left:871px;top:51.7px;" width="18" height="18" viewBox="0 0 18 18"><path d="M4 8.500c0 4 2 7 5 8.500" fill="none" stroke="#18a848" stroke-width="1.800"/><path d="M7 8.500v8.500" stroke="#111" stroke-width="1" stroke-dasharray="1.500 1"/><path d="M9 9c-1 3-1 5 0 8" fill="none" stroke="#111" stroke-width="1.200"/><path d="M6.8 4.5c2.5 -4.8 7.9 -4.8 10.4 0c-2.5 4.8 -7.9 4.8 -10.4 0z" fill="#1c1c84"/><circle cx="12" cy="4.5" r="2.3" fill="#7c84cc"/><circle cx="12" cy="4.5" r="1.2" fill="#10104c"/></svg>
<svg class="a" style="left:897px;top:51.7px;" width="18" height="18" viewBox="0 0 18 18"><text x="0.500" y="6.500" style="font-family:'Liberation Sans',sans-serif;font-size:8px;font-weight:bold" fill="#666" textLength="17" lengthAdjust="spacingAndGlyphs">x.xx</text><path d="M6 8c0 4 2 7 5 8.500M9 8c0 3 1 6 3 8" fill="none" stroke="#8c8c8c" stroke-width="1.200" stroke-dasharray="2 1"/></svg>
<div class="a" style="left:919.5px;top:48.5px;width:24.5px;height:23px;background:#cce4f8;border:1px solid #98c8f0;border-radius:3px;"></div>
<svg class="a" style="left:922.7px;top:51.7px;" width="18" height="18" viewBox="0 0 18 18"><path d="M6.500 6v6" stroke="#3a6ac8" stroke-width="2.200"/><path d="M3 10.500l3.500 4.500 3.500-4.500z" fill="#3a6ac8"/><path d="M1 16.500h16" stroke="#222" stroke-width="1.800"/><path d="M6.8 4.5c2.5 -4.8 7.9 -4.8 10.4 0c-2.5 4.8 -7.9 4.8 -10.4 0z" fill="#1c1c84"/><circle cx="12" cy="4.5" r="2.3" fill="#7c84cc"/><circle cx="12" cy="4.5" r="1.2" fill="#10104c"/></svg>
<svg class="a" style="left:949px;top:51.7px;" width="18" height="18" viewBox="0 0 18 18"><text x="0.500" y="6.500" style="font-family:'Liberation Sans',sans-serif;font-size:8px;font-weight:bold" fill="#666" textLength="17" lengthAdjust="spacingAndGlyphs">x.xx</text><path d="M6.500 8v5" stroke="#aaa" stroke-width="2.200"/><path d="M3 11.500l3.500 4 3.500-4z" fill="#aaa"/><path d="M1 17h16" stroke="#888" stroke-width="1.600"/></svg>
<svg class="a" style="left:973px;top:51.7px;" width="18" height="18" viewBox="0 0 18 18"><path d="M2 5l5-2v12l-5 2z" fill="#c8c8c8"/><path d="M7 3h6v12h-6z" fill="#dcdcdc"/><ellipse cx="10" cy="15" rx="3" ry="1.200" fill="#b8b8b8"/><path d="M6.8 4.5c2.5 -4.8 7.9 -4.8 10.4 0c-2.5 4.8 -7.9 4.8 -10.4 0z" fill="#9a9a9a"/><circle cx="12" cy="4.5" r="2.3" fill="#d0d0d0"/><circle cx="12" cy="4.5" r="1.2" fill="#8a8a8a"/></svg>
<div class="a" style="left:997.5px;top:48.5px;width:22px;height:23px;background:#cce4f8;border:1px solid #98c8f0;border-radius:3px;"></div>
<div class="a" style="left:1019.5px;top:48.5px;width:12px;height:23px;background:#cce4f8;border:1px solid #98c8f0;border-radius:3px;"></div>
<svg class="a" style="left:1000px;top:51.7px;" width="18" height="18" viewBox="0 0 18 18"><rect x="1" y="5" width="13" height="12.500" fill="#5078b8"/><path d="M1 9h13M1 13h13M5.500 5v12.500M10 5v12.500" stroke="#a8c4ec" stroke-width="1"/><path d="M6.8 4.5c2.5 -4.8 7.9 -4.8 10.4 0c-2.5 4.8 -7.9 4.8 -10.4 0z" fill="#1c1c84"/><circle cx="12" cy="4.5" r="2.3" fill="#7c84cc"/><circle cx="12" cy="4.5" r="1.2" fill="#10104c"/></svg>
<svg class="a" style="left:1021.7px;top:58.7px;" width="7.4" height="4.2" viewBox="0 0 7.4 4.2"><path d="M0 0h7.400l-3.700 4.200z" fill="#111"/></svg>
<svg class="a" style="left:1036px;top:51.7px;" width="18" height="18" viewBox="0 0 18 18"><path d="M3 11.500h15v-5.500z" fill="#d82a20"/><path d="M0 11.200h10l-10 4z" fill="#1a3a9a"/><path d="M5.8 4.5c2.5 -4.8 7.9 -4.8 10.4 0c-2.5 4.8 -7.9 4.8 -10.4 0z" fill="#1c1c84"/><circle cx="11" cy="4.5" r="2.3" fill="#7c84cc"/><circle cx="11" cy="4.5" r="1.2" fill="#10104c"/></svg>
<svg class="a" style="left:1063px;top:51.7px;" width="18" height="18" viewBox="0 0 18 18"><text x="0.500" y="6.500" style="font-family:'Liberation Sans',sans-serif;font-size:8px;font-weight:bold" fill="#888" textLength="17" lengthAdjust="spacingAndGlyphs">x.xx</text><path d="M0.500 15.500h17v-6z" fill="#a8a8a8"/></svg>
<div class="a" style="left:1087px;top:51px;width:1px;height:20px;background:#a8a8a8;"></div>
<svg class="a" style="left:1095px;top:51.7px;" width="18" height="18" viewBox="0 0 18 18"><path d="M2 11.500h12v-4.500z" fill="#d82a20"/><path d="M0 11.200h9l-9 3.600z" fill="#1a3a9a"/><rect x="8" y="0.5" width="9.5" height="7" fill="#f2f2f2" stroke="#777" stroke-width=".9"/><rect x="8" y="0.5" width="9.5" height="2.200" fill="#2a48b8"/><circle cx="13" cy="13.5" r="3.2" fill="none" stroke="#5b8fe8" stroke-width="2.200" stroke-dasharray="1.300 1.100"/><circle cx="13" cy="13.5" r="2" fill="none" stroke="#5b8fe8" stroke-width="1.400"/></svg>
<svg class="a" style="left:1120px;top:51.7px;" width="18" height="18" viewBox="0 0 18 18"><path d="M1 2v15M17 2v15" stroke="#111" stroke-width="1.500"/><path d="M1 6.500h16M1 12.500h16" stroke="#111" stroke-width="1"/><circle cx="4.500" cy="6.500" r="2" fill="#e8c828"/><circle cx="9" cy="6.500" r="2" fill="#e8c828"/><circle cx="14" cy="6.500" r="2" fill="#c03030"/><circle cx="4.500" cy="12.500" r="2" fill="#3858c8"/><circle cx="9" cy="12.500" r="2" fill="#3858c8"/><circle cx="13.500" cy="12.500" r="2" fill="#3858c8"/></svg>
<svg class="a" style="left:1142.8px;top:58.7px;" width="7.4" height="4.2" viewBox="0 0 7.4 4.2"><path d="M0 0h7.400l-3.700 4.200z" fill="#111"/></svg>
<div class="a" style="left:1154.5px;top:48px;width:1px;height:27px;background:#e0e0e0;"></div>
<svg class="a" style="left:1159px;top:51px;" width="3" height="20" viewBox="0 0 3 20"><rect x="0" y="0" width="1.500" height="1.500" fill="#b4b4b4"/><rect x="0.800" y="1" width="1" height="1" fill="#e8e8e8"/><rect x="0" y="4" width="1.500" height="1.500" fill="#b4b4b4"/><rect x="0.800" y="5" width="1" height="1" fill="#e8e8e8"/><rect x="0" y="8" width="1.500" height="1.500" fill="#b4b4b4"/><rect x="0.800" y="9" width="1" height="1" fill="#e8e8e8"/><rect x="0" y="12" width="1.500" height="1.500" fill="#b4b4b4"/><rect x="0.800" y="13" width="1" height="1" fill="#e8e8e8"/><rect x="0" y="16" width="1.500" height="1.500" fill="#b4b4b4"/><rect x="0.800" y="17" width="1" height="1" fill="#e8e8e8"/></svg>
<svg class="a" style="left:1169px;top:51.7px;" width="18" height="18" viewBox="0 0 18 18"><circle cx="6.500" cy="7.500" r="5" fill="#fff" stroke="#666" stroke-width="1.800"/><path d="M10 11l6 6" stroke="#666" stroke-width="2.600"/><path d="M10 1l7 7M17 1l-7 7" stroke="#e8101c" stroke-width="2.400"/></svg>
<svg class="a" style="left:1195px;top:57.7px;" width="8" height="6" viewBox="0 0 8 6"><path d="M0.500 0.500l2.500 2.500-2.500 2.500M4.500 0.500l2.500 2.500-2.500 2.500" fill="none" stroke="#555" stroke-width=".9"/></svg>
<svg class="a" style="left:5px;top:78px;" width="3" height="20" viewBox="0 0 3 20"><rect x="0" y="0" width="1.500" height="1.500" fill="#b4b4b4"/><rect x="0.800" y="1" width="1" height="1" fill="#e8e8e8"/><rect x="0" y="4" width="1.500" height="1.500" fill="#b4b4b4"/><rect x="0.800" y="5" width="1" height="1" fill="#e8e8e8"/><rect x="0" y="8" width="1.500" height="1.500" fill="#b4b4b4"/><rect x="0.800" y="9" width="1" height="1" fill="#e8e8e8"/><rect x="0" y="12" width="1.500" height="1.500" fill="#b4b4b4"/><rect x="0.800" y="13" width="1" height="1" fill="#e8e8e8"/><rect x="0" y="16" width="1.500" height="1.500" fill="#b4b4b4"/><rect x="0.800" y="17" width="1" height="1" fill="#e8e8e8"/></svg>
<svg class="a" style="left:11px;top:79.5px;" width="18" height="18" viewBox="0 0 18 18"><polygon points="8.00,0.04 9.02,3.24 11.20,2.50 10.46,4.68 13.66,5.70 10.46,6.72 11.20,8.90 9.02,8.16 8.00,11.36 6.98,8.16 4.80,8.90 5.54,6.72 2.34,5.70 5.54,4.68 4.80,2.50 6.98,3.24" fill="#f2ea00" stroke="#a8a468" stroke-width=".45" stroke-linejoin="round"/><circle cx="8" cy="5.7" r="2.83" fill="#f6f000"/><circle cx="11.5" cy="10.2" r="1.7" fill="#e8101c"/></svg>
<svg class="a" style="left:37.3px;top:86.5px;" width="7.4" height="4.2" viewBox="0 0 7.4 4.2"><path d="M0 0h7.400l-3.700 4.200z" fill="#111"/></svg>
<svg class="a" style="left:51px;top:79.5px;" width="18" height="18" viewBox="0 0 18 18"><path d="M4 16L16 3" stroke="#111" stroke-width="1.400"/><circle cx="4" cy="16" r="1.7" fill="#e8101c"/><circle cx="16" cy="3" r="1.7" fill="#e8101c"/><polygon points="5.50,-0.16 6.52,3.04 8.70,2.30 7.96,4.48 11.16,5.50 7.96,6.52 8.70,8.70 6.52,7.96 5.50,11.16 4.48,7.96 2.30,8.70 3.04,6.52 -0.16,5.50 3.04,4.48 2.30,2.30 4.48,3.04" fill="#f2ea00" stroke="#a8a468" stroke-width=".45" stroke-linejoin="round"/><circle cx="5.5" cy="5.5" r="2.83" fill="#f6f000"/></svg>
<svg class="a" style="left:78px;top:79.5px;" width="18" height="18" viewBox="0 0 18 18"><path d="M3 16L15 2.500" stroke="#a4bce4" stroke-width="3.200"/><path d="M3 16L15 2.500" stroke="#6a8cc8" stroke-width=".6"/><circle cx="3" cy="16" r="1.7" fill="#e8101c"/><circle cx="15" cy="2.5" r="1.7" fill="#e8101c"/><polygon points="5.50,-0.16 6.52,3.04 8.70,2.30 7.96,4.48 11.16,5.50 7.96,6.52 8.70,8.70 6.52,7.96 5.50,11.16 4.48,7.96 2.30,8.70 3.04,6.52 -0.16,5.50 3.04,4.48 2.30,2.30 4.48,3.04" fill="#f2ea00" stroke="#a8a468" stroke-width=".45" stroke-linejoin="round"/><circle cx="5.5" cy="5.5" r="2.83" fill="#f6f000"/><path d="M12.500 12.500h5M12.500 17h5M15 12.500v4.500" stroke="#6a8cc8" stroke-width="1.400"/></svg>
<svg class="a" style="left:101.3px;top:86.5px;" width="7.4" height="4.2" viewBox="0 0 7.4 4.2"><path d="M0 0h7.400l-3.700 4.200z" fill="#111"/></svg>
<svg class="a" style="left:116px;top:79.5px;" width="18" height="18" viewBox="0 0 18 18"><path d="M8 3h8v7l-7 6.500M8 3v6" fill="none" stroke="#111" stroke-width="1.400"/><circle cx="8" cy="3" r="1.5" fill="#e8101c"/><circle cx="16" cy="3" r="1.5" fill="#e8101c"/><circle cx="16" cy="10" r="1.5" fill="#e8101c"/><circle cx="9" cy="16.5" r="1.5" fill="#e8101c"/><circle cx="8" cy="9" r="1.5" fill="#e8101c"/><polygon points="4.50,0.69 5.46,3.69 7.50,3.00 6.81,5.04 9.81,6.00 6.81,6.96 7.50,9.00 5.46,8.31 4.50,11.31 3.54,8.31 1.50,9.00 2.19,6.96 -0.81,6.00 2.19,5.04 1.50,3.00 3.54,3.69" fill="#f2ea00" stroke="#a8a468" stroke-width=".45" stroke-linejoin="round"/><circle cx="4.5" cy="6" r="2.65" fill="#f6f000"/></svg>
<svg class="a" style="left:140px;top:86.5px;" width="7.4" height="4.2" viewBox="0 0 7.4 4.2"><path d="M0 0h7.400l-3.700 4.200z" fill="#111"/></svg>
<div class="a" style="left:152.8px;top:79px;width:1px;height:19px;background:#a8a8a8;"></div>
<svg class="a" style="left:160px;top:79.5px;" width="18" height="18" viewBox="0 0 18 18"><path d="M10 7.5l-5 8h10z" fill="#68d878"/><ellipse cx="10" cy="15.5" rx="5" ry="1.5" fill="#38b858"/><circle cx="10" cy="8.5" r="2.8" fill="#087830"/><polygon points="6.00,-0.93 6.98,2.14 9.07,1.43 8.36,3.52 11.43,4.50 8.36,5.48 9.07,7.57 6.98,6.86 6.00,9.93 5.02,6.86 2.93,7.57 3.64,5.48 0.57,4.50 3.64,3.52 2.93,1.43 5.02,2.14" fill="#f2ea00" stroke="#a8a468" stroke-width=".45" stroke-linejoin="round"/><circle cx="6" cy="4.5" r="2.71" fill="#f6f000"/><circle cx="11" cy="3.5" r="1.5" fill="#e8101c"/></svg>
<svg class="a" style="left:187px;top:79.5px;" width="18" height="18" viewBox="0 0 18 18"><path d="M2 9.500h15" stroke="#111" stroke-width="1.400"/><path d="M5 10l-3 4.8h6z" fill="#68d878"/><ellipse cx="5" cy="14.8" rx="3" ry="0.9" fill="#38b858"/><circle cx="5" cy="10.6" r="1.68" fill="#087830"/><path d="M13 10l-3 4.8h6z" fill="#68d878"/><ellipse cx="13" cy="14.8" rx="3" ry="0.9" fill="#38b858"/><circle cx="13" cy="10.6" r="1.68" fill="#087830"/><circle cx="16.5" cy="9.5" r="1.4" fill="#e8101c"/><circle cx="2" cy="9.5" r="1.4" fill="#e8101c"/><polygon points="6.00,-0.93 6.98,2.14 9.07,1.43 8.36,3.52 11.43,4.50 8.36,5.48 9.07,7.57 6.98,6.86 6.00,9.93 5.02,6.86 2.93,7.57 3.64,5.48 0.57,4.50 3.64,3.52 2.93,1.43 5.02,2.14" fill="#f2ea00" stroke="#a8a468" stroke-width=".45" stroke-linejoin="round"/><circle cx="6" cy="4.5" r="2.71" fill="#f6f000"/></svg>
<svg class="a" style="left:213px;top:79.5px;" width="18" height="18" viewBox="0 0 18 18"><path d="M2 9l5-2.500h10l-4 3.500h-10z" fill="#6a9cd8"/><path d="M4.5 11v4" stroke="#28b848" stroke-width="1.400"/><path d="M2.5 17l2-2.500 2 2.500z" fill="#28b848"/><path d="M8.5 11v4" stroke="#28b848" stroke-width="1.400"/><path d="M6.5 17l2-2.500 2 2.500z" fill="#28b848"/><path d="M12.5 11v4" stroke="#28b848" stroke-width="1.400"/><path d="M10.5 17l2-2.500 2 2.500z" fill="#28b848"/><polygon points="6.00,-0.93 6.98,2.14 9.07,1.43 8.36,3.52 11.43,4.50 8.36,5.48 9.07,7.57 6.98,6.86 6.00,9.93 5.02,6.86 2.93,7.57 3.64,5.48 0.57,4.50 3.64,3.52 2.93,1.43 5.02,2.14" fill="#f2ea00" stroke="#a8a468" stroke-width=".45" stroke-linejoin="round"/><circle cx="6" cy="4.5" r="2.71" fill="#f6f000"/></svg>
<div class="a" style="left:237.5px;top:79px;width:1px;height:19px;background:#a8a8a8;"></div>
<svg class="a" style="left:246px;top:79.5px;" width="18" height="18" viewBox="0 0 18 18"><rect x="5" y="7" width="11.500" height="9.500" fill="#78a4dc" stroke="#4a74b0" stroke-width=".8"/><circle cx="5.5" cy="7.5" r="1.6" fill="#e8101c"/><circle cx="16" cy="16" r="1.6" fill="#e8101c"/><polygon points="5.50,-0.66 6.52,2.54 8.70,1.80 7.96,3.98 11.16,5.00 7.96,6.02 8.70,8.20 6.52,7.46 5.50,10.66 4.48,7.46 2.30,8.20 3.04,6.02 -0.16,5.00 3.04,3.98 2.30,1.80 4.48,2.54" fill="#f2ea00" stroke="#a8a468" stroke-width=".45" stroke-linejoin="round"/><circle cx="5.5" cy="5" r="2.83" fill="#f6f000"/></svg>
<svg class="a" style="left:269.3px;top:86.5px;" width="7.4" height="4.2" viewBox="0 0 7.4 4.2"><path d="M0 0h7.400l-3.700 4.200z" fill="#111"/></svg>
<svg class="a" style="left:284px;top:79.5px;" width="18" height="18" viewBox="0 0 18 18"><path d="M5 6c3-3 8-2 10 2 1 3 0 6-2 8-2-2-5-2-8 0 1-3 1-7 0-10z" fill="#78a4dc" stroke="#4a74b0" stroke-width=".8"/><circle cx="5" cy="3.5" r="1.5" fill="#e8101c"/><circle cx="7" cy="9" r="1.5" fill="#e8101c"/><circle cx="10" cy="12" r="1.5" fill="#e8101c"/><circle cx="15.5" cy="10" r="1.5" fill="#e8101c"/><polygon points="6.00,-1.43 6.98,1.64 9.07,0.93 8.36,3.02 11.43,4.00 8.36,4.98 9.07,7.07 6.98,6.36 6.00,9.43 5.02,6.36 2.93,7.07 3.64,4.98 0.57,4.00 3.64,3.02 2.93,0.93 5.02,1.64" fill="#f2ea00" stroke="#a8a468" stroke-width=".45" stroke-linejoin="round"/><circle cx="6" cy="4" r="2.71" fill="#f6f000"/></svg>
<svg class="a" style="left:307.3px;top:86.5px;" width="7.4" height="4.2" viewBox="0 0 7.4 4.2"><path d="M0 0h7.400l-3.700 4.200z" fill="#111"/></svg>
<svg class="a" style="left:322px;top:79.5px;" width="18" height="18" viewBox="0 0 18 18"><rect x="3.500" y="3.500" width="12" height="12" fill="none" stroke="#6a94d0" stroke-width="2.800"/><circle cx="4" cy="4" r="1.6" fill="#e8101c"/><circle cx="15" cy="4" r="1.6" fill="#e8101c"/><circle cx="4" cy="15" r="1.6" fill="#e8101c"/><circle cx="15" cy="15" r="1.6" fill="#e8101c"/><polygon points="5.00,-0.93 5.98,2.14 8.07,1.43 7.36,3.52 10.43,4.50 7.36,5.48 8.07,7.57 5.98,6.86 5.00,9.93 4.02,6.86 1.93,7.57 2.64,5.48 -0.43,4.50 2.64,3.52 1.93,1.43 4.02,2.14" fill="#f2ea00" stroke="#a8a468" stroke-width=".45" stroke-linejoin="round"/><circle cx="5" cy="4.5" r="2.71" fill="#f6f000"/></svg>
<svg class="a" style="left:345.8px;top:86.5px;" width="7.4" height="4.2" viewBox="0 0 7.4 4.2"><path d="M0 0h7.400l-3.700 4.200z" fill="#111"/></svg>
<svg class="a" style="left:360px;top:79.5px;" width="18" height="18" viewBox="0 0 18 18"><path d="M2.500 6h8v9l-8-1z" fill="#8ab0e4"/><path d="M10.500 6l5.500-4.500v10l-5.500 5.500z" fill="#5a84c4"/><path d="M2.500 6l4-3 4 3z" fill="#a8c8f0"/><circle cx="2.5" cy="14" r="1.5" fill="#e8101c"/><circle cx="10.5" cy="16.5" r="1.5" fill="#e8101c"/><circle cx="16" cy="10" r="1.5" fill="#e8101c"/><polygon points="6.00,-1.43 6.98,1.64 9.07,0.93 8.36,3.02 11.43,4.00 8.36,4.98 9.07,7.07 6.98,6.36 6.00,9.43 5.02,6.36 2.93,7.07 3.64,4.98 0.57,4.00 3.64,3.02 2.93,0.93 5.02,1.64" fill="#f2ea00" stroke="#a8a468" stroke-width=".45" stroke-linejoin="round"/><circle cx="6" cy="4" r="2.71" fill="#f6f000"/></svg>
<svg class="a" style="left:383.8px;top:86.5px;" width="7.4" height="4.2" viewBox="0 0 7.4 4.2"><path d="M0 0h7.400l-3.700 4.200z" fill="#111"/></svg>
<svg class="a" style="left:398px;top:79.5px;" width="18" height="18" viewBox="0 0 18 18"><path d="M1 7l4-3h10l-3 3z" fill="#dcdcdc"/><path d="M1 7h11v10h-11z" fill="#c8c8c8"/><path d="M12 7l3-3v10l-3 3z" fill="#b0b0b0"/><rect x="8" y="0.5" width="9.5" height="6.5" fill="#f2f2f2" stroke="#777" stroke-width=".9"/><rect x="8" y="0.5" width="9.5" height="2.200" fill="#9a9a9a"/><polygon points="4.50,-0.22 5.35,2.45 7.17,1.83 6.55,3.65 9.22,4.50 6.55,5.35 7.17,7.17 5.35,6.55 4.50,9.22 3.65,6.55 1.83,7.17 2.45,5.35 -0.22,4.50 2.45,3.65 1.83,1.83 3.65,2.45" fill="#c4c4c4" stroke="#b0b0b0" stroke-width=".45" stroke-linejoin="round"/><circle cx="4.5" cy="4.5" r="2.36" fill="#c8c8c8"/></svg>
<div class="a" style="left:423.2px;top:79px;width:1px;height:19px;background:#a8a8a8;"></div>
<svg class="a" style="left:428px;top:79.5px;" width="18" height="18" viewBox="0 0 18 18"><path d="M12.500 2v14" stroke="#a4c4f0" stroke-width="3.600"/><path d="M10.700 2v14M14.300 2v14" stroke="#5a84c4" stroke-width=".6"/><circle cx="12.5" cy="2" r="1.6" fill="#e8101c"/><circle cx="12.5" cy="16.5" r="1.6" fill="#e8101c"/><polygon points="7.00,0.34 8.02,3.54 10.20,2.80 9.46,4.98 12.66,6.00 9.46,7.02 10.20,9.20 8.02,8.46 7.00,11.66 5.98,8.46 3.80,9.20 4.54,7.02 1.34,6.00 4.54,4.98 3.80,2.80 5.98,3.54" fill="#f2ea00" stroke="#a8a468" stroke-width=".45" stroke-linejoin="round"/><circle cx="7" cy="6" r="2.83" fill="#f6f000"/></svg>
<svg class="a" style="left:454.3px;top:86.5px;" width="7.4" height="4.2" viewBox="0 0 7.4 4.2"><path d="M0 0h7.400l-3.700 4.200z" fill="#111"/></svg>
<div class="a" style="left:467.5px;top:79px;width:1px;height:19px;background:#a8a8a8;"></div>
<svg class="a" style="left:473px;top:79.5px;" width="18" height="18" viewBox="0 0 18 18"><path d="M9 3v8" stroke="#b4b4b4" stroke-width="1.400"/><path d="M7 10l2 3 2-3z" fill="#b4b4b4"/><polygon points="5.00,-0.22 5.85,2.45 7.67,1.83 7.05,3.65 9.72,4.50 7.05,5.35 7.67,7.17 5.85,6.55 5.00,9.22 4.15,6.55 2.33,7.17 2.95,5.35 0.28,4.50 2.95,3.65 2.33,1.83 4.15,2.45" fill="#c4c4c4" stroke="#b0b0b0" stroke-width=".45" stroke-linejoin="round"/><circle cx="5" cy="4.5" r="2.36" fill="#c8c8c8"/><circle cx="9" cy="15.500" r="1.500" fill="#aaa"/></svg>
<svg class="a" style="left:501px;top:79.5px;" width="18" height="18" viewBox="0 0 18 18"><path d="M4 3v8" stroke="#b4b4b4" stroke-width="1.400"/><path d="M2 10l2 3 2-3z" fill="#b4b4b4"/><path d="M9 3v8" stroke="#b4b4b4" stroke-width="1.400"/><path d="M7 10l2 3 2-3z" fill="#b4b4b4"/><path d="M14 3v8" stroke="#b4b4b4" stroke-width="1.400"/><path d="M12 10l2 3 2-3z" fill="#b4b4b4"/><path d="M4 3h10" stroke="#b4b4b4" stroke-width="1.200"/><polygon points="5.00,-0.22 5.85,2.45 7.67,1.83 7.05,3.65 9.72,4.50 7.05,5.35 7.67,7.17 5.85,6.55 5.00,9.22 4.15,6.55 2.33,7.17 2.95,5.35 0.28,4.50 2.95,3.65 2.33,1.83 4.15,2.45" fill="#c4c4c4" stroke="#b0b0b0" stroke-width=".45" stroke-linejoin="round"/><circle cx="5" cy="4.5" r="2.36" fill="#c8c8c8"/><path d="M1 15.500h16" stroke="#a0a0a0" stroke-width="1.600"/><circle cx="1.500" cy="15.500" r="1.300" fill="#999"/><circle cx="16.500" cy="15.500" r="1.300" fill="#999"/></svg>
<svg class="a" style="left:528px;top:79.5px;" width="18" height="18" viewBox="0 0 18 18"><path d="M4 3v8" stroke="#b4b4b4" stroke-width="1.400"/><path d="M2 10l2 3 2-3z" fill="#b4b4b4"/><path d="M9 3v8" stroke="#b4b4b4" stroke-width="1.400"/><path d="M7 10l2 3 2-3z" fill="#b4b4b4"/><path d="M14 3v8" stroke="#b4b4b4" stroke-width="1.400"/><path d="M12 10l2 3 2-3z" fill="#b4b4b4"/><path d="M4 3h10" stroke="#b4b4b4" stroke-width="1.200"/><polygon points="5.00,-0.22 5.85,2.45 7.67,1.83 7.05,3.65 9.72,4.50 7.05,5.35 7.67,7.17 5.85,6.55 5.00,9.22 4.15,6.55 2.33,7.17 2.95,5.35 0.28,4.50 2.95,3.65 2.33,1.83 4.15,2.45" fill="#c4c4c4" stroke="#b0b0b0" stroke-width=".45" stroke-linejoin="round"/><circle cx="5" cy="4.5" r="2.36" fill="#c8c8c8"/><rect x="1" y="14" width="16" height="3" rx="1.500" fill="#b0b0b0"/></svg>
<svg class="a" style="left:554px;top:79.5px;" width="18" height="18" viewBox="0 0 18 18"><path d="M4 3v8" stroke="#b4b4b4" stroke-width="1.400"/><path d="M2 10l2 3 2-3z" fill="#b4b4b4"/><path d="M9 3v8" stroke="#b4b4b4" stroke-width="1.400"/><path d="M7 10l2 3 2-3z" fill="#b4b4b4"/><path d="M14 3v8" stroke="#b4b4b4" stroke-width="1.400"/><path d="M12 10l2 3 2-3z" fill="#b4b4b4"/><path d="M4 3h10" stroke="#b4b4b4" stroke-width="1.200"/><polygon points="5.00,-0.22 5.85,2.45 7.67,1.83 7.05,3.65 9.72,4.50 7.05,5.35 7.67,7.17 5.85,6.55 5.00,9.22 4.15,6.55 2.33,7.17 2.95,5.35 0.28,4.50 2.95,3.65 2.33,1.83 4.15,2.45" fill="#c4c4c4" stroke="#b0b0b0" stroke-width=".45" stroke-linejoin="round"/><circle cx="5" cy="4.5" r="2.36" fill="#c8c8c8"/><path d="M1 14l4-2h12l-4 2zM1 14h12v3h-12zM13 14l4-2v3l-4 2z" fill="none" stroke="#a8a8a8" stroke-width="1"/></svg>
<svg class="a" style="left:580px;top:79.5px;" width="18" height="18" viewBox="0 0 18 18"><path d="M3 3c0 6 3 11 8 13" fill="none" stroke="#18a848" stroke-width="1.800"/><path d="M8 2v14" stroke="#111" stroke-width="1.200" stroke-dasharray="2 1.200"/><path d="M10 2v14" stroke="#111" stroke-width=".8"/><polygon points="4.50,-0.43 5.48,2.64 7.57,1.93 6.86,4.02 9.93,5.00 6.86,5.98 7.57,8.07 5.48,7.36 4.50,10.43 3.52,7.36 1.43,8.07 2.14,5.98 -0.93,5.00 2.14,4.02 1.43,1.93 3.52,2.64" fill="#f2ea00" stroke="#a8a468" stroke-width=".45" stroke-linejoin="round"/><circle cx="4.5" cy="5" r="2.71" fill="#f6f000"/><path d="M11.500 12.500h5.500M11.500 17h5.500M14.250 12.500v4.500" stroke="#444" stroke-width="1.600"/></svg>
<svg class="a" style="left:603.8px;top:86.5px;" width="7.4" height="4.2" viewBox="0 0 7.4 4.2"><path d="M0 0h7.400l-3.700 4.200z" fill="#111"/></svg>
<svg class="a" style="left:618px;top:79.5px;" width="18" height="18" viewBox="0 0 18 18"><polygon points="6.00,-0.81 6.96,2.19 9.00,1.50 8.31,3.54 11.31,4.50 8.31,5.46 9.00,7.50 6.96,6.81 6.00,9.81 5.04,6.81 3.00,7.50 3.69,5.46 0.69,4.50 3.69,3.54 3.00,1.50 5.04,2.19" fill="#c4c4c4" stroke="#b0b0b0" stroke-width=".45" stroke-linejoin="round"/><circle cx="6" cy="4.5" r="2.65" fill="#c8c8c8"/><circle cx="7" cy="4.500" r="2.500" fill="#a8a8a8"/><path d="M2 10l5-5 5 5-2 2h-6z" fill="#b8b8b8"/><path d="M3 10l5-2 5 3-4 2z" fill="#c8c8c8"/><path d="M11 11l4 4" stroke="#aaa" stroke-width="1.200" stroke-dasharray="2 1"/><circle cx="16" cy="16.500" r="1.300" fill="#999"/></svg>
<svg class="a" style="left:641.3px;top:86.5px;" width="7.4" height="4.2" viewBox="0 0 7.4 4.2"><path d="M0 0h7.400l-3.700 4.200z" fill="#888"/></svg>
<div class="a" style="left:652.5px;top:75px;width:1px;height:28px;background:#e0e0e0;"></div>
<svg class="a" style="left:658px;top:78px;" width="3" height="20" viewBox="0 0 3 20"><rect x="0" y="0" width="1.500" height="1.500" fill="#b4b4b4"/><rect x="0.800" y="1" width="1" height="1" fill="#e8e8e8"/><rect x="0" y="4" width="1.500" height="1.500" fill="#b4b4b4"/><rect x="0.800" y="5" width="1" height="1" fill="#e8e8e8"/><rect x="0" y="8" width="1.500" height="1.500" fill="#b4b4b4"/><rect x="0.800" y="9" width="1" height="1" fill="#e8e8e8"/><rect x="0" y="12" width="1.500" height="1.500" fill="#b4b4b4"/><rect x="0.800" y="13" width="1" height="1" fill="#e8e8e8"/><rect x="0" y="16" width="1.500" height="1.500" fill="#b4b4b4"/><rect x="0.800" y="17" width="1" height="1" fill="#e8e8e8"/></svg>
<svg class="a" style="left:667px;top:79.5px;" width="18" height="18" viewBox="0 0 18 18"><path d="M0.500 5.500h13l-5 6v6l-3-1.500v-4.500z" fill="#5b8fd8"/><rect x="8" y="0.5" width="9.5" height="7" fill="#f2f2f2" stroke="#777" stroke-width=".9"/><rect x="8" y="0.5" width="9.5" height="2.200" fill="#2a48b8"/></svg>
<div class="a" style="left:692px;top:79px;width:1px;height:19px;background:#a8a8a8;"></div>
<svg class="a" style="left:700px;top:79.5px;" width="18" height="18" viewBox="0 0 18 18"><ellipse cx="9" cy="9" rx="8" ry="6.500" fill="none" stroke="#b8b8b8" stroke-width="1.200"/><path d="M4 16v-11h10v11" fill="none" stroke="#9a9a9a" stroke-width="2"/></svg>
<svg class="a" style="left:726px;top:79.5px;" width="18" height="18" viewBox="0 0 18 18"><rect x="0.500" y="3" width="17" height="12.500" fill="#d0d0d0" stroke="#aaa" stroke-width="1"/><rect x="4.500" y="3" width="9" height="12.500" fill="#e4e4e4"/><path d="M7 6.500v6l5-3z" fill="#a0a0a0"/><path d="M2.500 5v2M2.500 8.500v2M2.500 12v2M15.500 5v2M15.500 8.500v2M15.500 12v2" stroke="#f4f4f4" stroke-width="1.500"/></svg>
<div class="a" style="left:751.2px;top:79px;width:1px;height:19px;background:#a8a8a8;"></div>
<svg class="a" style="left:760px;top:79.5px;" width="18" height="18" viewBox="0 0 18 18"><path d="M1 3c1 5 2 5 3 5 2 6 8 6 10 0 1 0 2 0 3-5" fill="none" stroke="#9a9a9a" stroke-width="1.200"/><path d="M1 8h16" stroke="#b8b8b8" stroke-width="1"/><path d="M1 3v5M17 3v5" stroke="#9a9a9a" stroke-width="1"/></svg>
<svg class="a" style="left:785px;top:79.5px;" width="18" height="18" viewBox="0 0 18 18"><path d="M1 10c4-5 9-6 16-4l-4 7c-4-2-8-1-12-3z" fill="#bcbcbc"/><path d="M3 10c4-3 8-4 12-3" fill="none" stroke="#e0e0e0" stroke-width="1.200"/></svg>
<svg class="a" style="left:811px;top:79.5px;" width="18" height="18" viewBox="0 0 18 18"><path d="M1 4l3-2.500h13l-3 2.500z" fill="#d4d4d4"/><rect x="1" y="4" width="13" height="13" fill="#b8b8b8"/><path d="M14 4l3-2.500v13l-3 2.500z" fill="#9c9c9c"/><circle cx="7.500" cy="10.500" r="3.800" fill="#d8d8d8"/><circle cx="7.500" cy="10.500" r="1.600" fill="#b0b0b0"/></svg>
<svg class="a" style="left:838px;top:79.5px;" width="18" height="18" viewBox="0 0 18 18"><circle cx="6" cy="3" r="1.800" fill="#a8a8a8"/><path d="M1 9l5-5 5 5z" fill="#b0b0b0"/><path d="M6 17v-5M3.500 13.500l2.500-3 2.500 3" fill="none" stroke="#a8a8a8" stroke-width="1.600"/><path d="M17 4h-5M13.500 1.500l-3 2.500 3 2.500" fill="none" stroke="#a8a8a8" stroke-width="1.600"/></svg>
<svg class="a" style="left:864px;top:79.5px;" width="18" height="18" viewBox="0 0 18 18"><path d="M0.500 15l17-10c-2 5-8 9-17 10z" fill="#b8b8b8"/></svg>
<div class="a" style="left:887.5px;top:79px;width:1px;height:19px;background:#a8a8a8;"></div>
<svg class="a" style="left:896px;top:79.5px;" width="18" height="18" viewBox="0 0 18 18"><path d="M1 13.500c3-5 5-5 8 0s5 5 8 0" fill="none" stroke="#8c8c8c" stroke-width="1.100"/><path d="M1 13.500h16" stroke="#8c8c8c" stroke-width="1"/><path d="M2 4.500h14" stroke="#8c8c8c" stroke-width="1.200"/><circle cx="2" cy="4.500" r="1.300" fill="#8c8c8c"/><circle cx="16" cy="4.500" r="1.300" fill="#8c8c8c"/></svg>
<svg class="a" style="left:922px;top:79.5px;" width="18" height="18" viewBox="0 0 18 18"><path d="M1 13.500c3-5 5-5 8 0s5 5 8 0" fill="none" stroke="#8c8c8c" stroke-width="1.100"/><path d="M1 13.500h16" stroke="#8c8c8c" stroke-width="1"/><rect x="1" y="2.500" width="16" height="3.800" rx="1.900" fill="#b8b8b8"/></svg>
<svg class="a" style="left:948px;top:79.5px;" width="18" height="18" viewBox="0 0 18 18"><path d="M1 13.500c3-5 5-5 8 0s5 5 8 0" fill="none" stroke="#8c8c8c" stroke-width="1.100"/><path d="M1 13.500h16" stroke="#8c8c8c" stroke-width="1"/><rect x="1" y="2.500" width="16" height="3.800" rx="1.900" fill="#b8b8b8"/><path d="M4 4.400h10" stroke="#777" stroke-width="1.200" stroke-dasharray="2.500 2"/></svg>
<svg class="a" style="left:974px;top:79.5px;" width="18" height="18" viewBox="0 0 18 18"><path d="M1 13.500c3-5 5-5 8 0s5 5 8 0" fill="none" stroke="#8c8c8c" stroke-width="1.100"/><path d="M1 13.500h16" stroke="#8c8c8c" stroke-width="1"/><path d="M2 2h14" stroke="#8c8c8c" stroke-width="1.100"/><path d="M3 9l2.500-5 2.500 5zM10 9l2.500-5 2.500 5z" fill="#a8a8a8"/><circle cx="2" cy="2" r="1.200" fill="#888"/><circle cx="16" cy="2" r="1.200" fill="#888"/></svg>
<svg class="a" style="left:1000px;top:79.5px;" width="18" height="18" viewBox="0 0 18 18"><path d="M1 12l16-9c-2 4-7 7-16 9z" fill="#b8b8b8"/><path d="M1 15.500c3-4 5-4 8 0s5 4 8 0" fill="none" stroke="#8c8c8c" stroke-width="1.100"/></svg>
<svg class="a" style="left:1026px;top:79.5px;" width="18" height="18" viewBox="0 0 18 18"><path d="M1 17l16-8-2 4z" fill="#4a7ce0"/><path d="M1 17l14-8" stroke="#777" stroke-width=".8"/><rect x="8" y="0.5" width="9.5" height="7" fill="#f2f2f2" stroke="#777" stroke-width=".9"/><rect x="8" y="0.5" width="9.5" height="2.200" fill="#2a48b8"/><polygon points="4.50,0.57 5.48,3.64 7.57,2.93 6.86,5.02 9.93,6.00 6.86,6.98 7.57,9.07 5.48,8.36 4.50,11.43 3.52,8.36 1.43,9.07 2.14,6.98 -0.93,6.00 2.14,5.02 1.43,2.93 3.52,3.64" fill="#f2ea00" stroke="#a8a468" stroke-width=".45" stroke-linejoin="round"/><circle cx="4.5" cy="6" r="2.71" fill="#f6f000"/></svg>
<svg class="a" style="left:1051px;top:79.5px;" width="18" height="18" viewBox="0 0 18 18"><path d="M9 1v12" stroke="#e84040" stroke-width="1.200"/><circle cx="9" cy="14" r="2.800" fill="#e010d8"/></svg>
<div class="a" style="left:1077px;top:79px;width:1px;height:19px;background:#a8a8a8;"></div>
<svg class="a" style="left:1085px;top:79.5px;" width="18" height="18" viewBox="0 0 18 18"><rect x="1" y="2" width="15" height="15" fill="#c4c4c4"/><path d="M1 17l15-15v15z" fill="#e0e0e0"/><path d="M9 9l6-7 2.500 2-6 7-3 1z" fill="#f0f0f0" stroke="#999" stroke-width=".8"/></svg>
<svg class="a" style="left:1108.8px;top:86.5px;" width="7.4" height="4.2" viewBox="0 0 7.4 4.2"><path d="M0 0h7.400l-3.700 4.200z" fill="#888"/></svg>
<div class="a" style="left:1120.3px;top:75px;width:1px;height:28px;background:#e0e0e0;"></div>
<svg class="a" style="left:1125px;top:78px;" width="3" height="20" viewBox="0 0 3 20"><rect x="0" y="0" width="1.500" height="1.500" fill="#b4b4b4"/><rect x="0.800" y="1" width="1" height="1" fill="#e8e8e8"/><rect x="0" y="4" width="1.500" height="1.500" fill="#b4b4b4"/><rect x="0.800" y="5" width="1" height="1" fill="#e8e8e8"/><rect x="0" y="8" width="1.500" height="1.500" fill="#b4b4b4"/><rect x="0.800" y="9" width="1" height="1" fill="#e8e8e8"/><rect x="0" y="12" width="1.500" height="1.500" fill="#b4b4b4"/><rect x="0.800" y="13" width="1" height="1" fill="#e8e8e8"/><rect x="0" y="16" width="1.500" height="1.500" fill="#b4b4b4"/><rect x="0.800" y="17" width="1" height="1" fill="#e8e8e8"/></svg>
<svg class="a" style="left:1134.5px;top:79.5px;" width="18" height="18" viewBox="0 0 18 18"><rect x="1" y="3" width="1.300" height="1.300" fill="#666"/><rect x="1" y="6" width="1.300" height="1.300" fill="#666"/><rect x="1" y="9" width="1.300" height="1.300" fill="#666"/><rect x="1" y="12" width="1.300" height="1.300" fill="#666"/><rect x="1" y="15" width="1.300" height="1.300" fill="#666"/><rect x="4" y="3" width="1.300" height="1.300" fill="#666"/><rect x="4" y="6" width="1.300" height="1.300" fill="#666"/><rect x="4" y="9" width="1.300" height="1.300" fill="#666"/><rect x="4" y="12" width="1.300" height="1.300" fill="#666"/><rect x="4" y="15" width="1.300" height="1.300" fill="#666"/><rect x="7" y="3" width="1.300" height="1.300" fill="#666"/><rect x="7" y="6" width="1.300" height="1.300" fill="#666"/><rect x="7" y="9" width="1.300" height="1.300" fill="#666"/><rect x="7" y="12" width="1.300" height="1.300" fill="#666"/><rect x="7" y="15" width="1.300" height="1.300" fill="#666"/><rect x="10" y="3" width="1.300" height="1.300" fill="#666"/><rect x="10" y="6" width="1.300" height="1.300" fill="#666"/><rect x="10" y="9" width="1.300" height="1.300" fill="#666"/><rect x="10" y="12" width="1.300" height="1.300" fill="#666"/><rect x="10" y="15" width="1.300" height="1.300" fill="#666"/><rect x="13" y="3" width="1.300" height="1.300" fill="#666"/><rect x="13" y="6" width="1.300" height="1.300" fill="#666"/><rect x="13" y="9" width="1.300" height="1.300" fill="#666"/><rect x="13" y="12" width="1.300" height="1.300" fill="#666"/><rect x="13" y="15" width="1.300" height="1.300" fill="#666"/><rect x="16" y="3" width="1.300" height="1.300" fill="#666"/><rect x="16" y="6" width="1.300" height="1.300" fill="#666"/><rect x="16" y="9" width="1.300" height="1.300" fill="#666"/><rect x="16" y="12" width="1.300" height="1.300" fill="#666"/><rect x="16" y="15" width="1.300" height="1.300" fill="#666"/><rect x="7.5" y="0.5" width="10" height="7.5" fill="#f2f2f2" stroke="#777" stroke-width=".9"/><rect x="7.5" y="0.5" width="10" height="2.200" fill="#2a48b8"/></svg>
<svg class="a" style="left:1160px;top:79.5px;" width="18" height="18" viewBox="0 0 18 18"><rect x="1.5" y="1.5" width="1.300" height="1.300" fill="#777"/><rect x="1.5" y="4.5" width="1.300" height="1.300" fill="#777"/><rect x="1.5" y="7.5" width="1.300" height="1.300" fill="#777"/><rect x="1.5" y="10.5" width="1.300" height="1.300" fill="#777"/><rect x="1.5" y="13.5" width="1.300" height="1.300" fill="#777"/><rect x="1.5" y="16.5" width="1.300" height="1.300" fill="#777"/><rect x="4.5" y="1.5" width="1.300" height="1.300" fill="#777"/><rect x="4.5" y="4.5" width="1.300" height="1.300" fill="#777"/><rect x="4.5" y="7.5" width="1.300" height="1.300" fill="#777"/><rect x="4.5" y="10.5" width="1.300" height="1.300" fill="#777"/><rect x="4.5" y="13.5" width="1.300" height="1.300" fill="#777"/><rect x="4.5" y="16.5" width="1.300" height="1.300" fill="#777"/><rect x="7.5" y="1.5" width="1.300" height="1.300" fill="#777"/><rect x="7.5" y="4.5" width="1.300" height="1.300" fill="#777"/><rect x="7.5" y="7.5" width="1.300" height="1.300" fill="#777"/><rect x="7.5" y="10.5" width="1.300" height="1.300" fill="#777"/><rect x="7.5" y="13.5" width="1.300" height="1.300" fill="#777"/><rect x="7.5" y="16.5" width="1.300" height="1.300" fill="#777"/><rect x="10.5" y="1.5" width="1.300" height="1.300" fill="#777"/><rect x="10.5" y="4.5" width="1.300" height="1.300" fill="#777"/><rect x="10.5" y="7.5" width="1.300" height="1.300" fill="#777"/><rect x="10.5" y="10.5" width="1.300" height="1.300" fill="#777"/><rect x="10.5" y="13.5" width="1.300" height="1.300" fill="#777"/><rect x="10.5" y="16.5" width="1.300" height="1.300" fill="#777"/><rect x="13.5" y="1.5" width="1.300" height="1.300" fill="#777"/><rect x="13.5" y="4.5" width="1.300" height="1.300" fill="#777"/><rect x="13.5" y="7.5" width="1.300" height="1.300" fill="#777"/><rect x="13.5" y="10.5" width="1.300" height="1.300" fill="#777"/><rect x="13.5" y="13.5" width="1.300" height="1.300" fill="#777"/><rect x="13.5" y="16.5" width="1.300" height="1.300" fill="#777"/><rect x="16.5" y="1.5" width="1.300" height="1.300" fill="#777"/><rect x="16.5" y="4.5" width="1.300" height="1.300" fill="#777"/><rect x="16.5" y="7.5" width="1.300" height="1.300" fill="#777"/><rect x="16.5" y="10.5" width="1.300" height="1.300" fill="#777"/><rect x="16.5" y="13.5" width="1.300" height="1.300" fill="#777"/><rect x="16.5" y="16.5" width="1.300" height="1.300" fill="#777"/><path d="M9 0v18M0 9h18" stroke="#1818a0" stroke-width="1.400"/><circle cx="9" cy="9" r="3.200" fill="#fff" stroke="#1818a0" stroke-width="1.400"/></svg>
<svg class="a" style="left:1195px;top:85.5px;" width="8" height="6" viewBox="0 0 8 6"><path d="M0.500 0.500l2.500 2.500-2.500 2.500M4.500 0.500l2.500 2.500-2.500 2.500" fill="none" stroke="#555" stroke-width=".9"/></svg>
<svg class="a" style="left:4px;top:869px;" width="18" height="18" viewBox="0 0 18 18"><path d="M3 14v-9" stroke="#1818a0" stroke-width="1.200"/><path d="M3 14l7-3" stroke="#18b028" stroke-width="1.400"/><path d="M3 14l9 2" stroke="#e01010" stroke-width="1.400"/><path d="M10 14.500l4 1.500-3.500 1.500z" fill="#e01010"/><circle cx="3" cy="14" r="1.500" fill="#f0d020"/><rect x="6" y="1" width="10" height="8" fill="#f2f2f2" stroke="#777" stroke-width=".9"/><rect x="6" y="1" width="10" height="2.200" fill="#2a48b8"/></svg>
<div class="a" style="left:26px;top:867.5px;width:134px;height:21px;background:#e6e8f4;"></div>
<div class="a" style="left:31px;top:872.5px;width:11px;height:10.5px;background:#c4fcfc;"></div>
<span class="t" style="left:47.50px;top:869px;font-size:10.5px;color:#101030;letter-spacing:0.046px;">1 - Global XYZ</span>
<svg class="a" style="left:145px;top:875px;" width="10" height="6" viewBox="0 0 10 6"><path d="M0.700 0.700l4.300 4.300 4.300-4.300" fill="none" stroke="#444" stroke-width="1.100"/></svg>
<div class="a" style="left:163.5px;top:868px;width:1px;height:20px;background:#a8a8a8;"></div>
<svg class="a" style="left:170px;top:869px;" width="18" height="18" viewBox="0 0 18 18"><path d="M1 5v-3.500h3.500M13.500 1.500h3.500v3.500M17 13v3.500h-3.500M4.500 16.500h-3.500v-3.500" fill="none" stroke="#1a3ab0" stroke-width="1.200" stroke-dasharray="2.500 1"/><path d="M4 7l3-2.500h7l-3 2.500z" fill="#c8d8ec"/><path d="M4 7h7v8h-7z" fill="#a8bcd8"/><path d="M11 7l3-2.500v8l-3 2.500z" fill="#6a86b0"/><rect x="9" y="0.5" width="8.5" height="6.5" fill="#f2f2f2" stroke="#777" stroke-width=".9"/><rect x="9" y="0.5" width="8.5" height="2.200" fill="#2a48b8"/><polygon points="4.00,0.32 4.66,2.40 6.08,1.92 5.60,3.34 7.68,4.00 5.60,4.66 6.08,6.08 4.66,5.60 4.00,7.68 3.34,5.60 1.92,6.08 2.40,4.66 0.32,4.00 2.40,3.34 1.92,1.92 3.34,2.40" fill="#f2ea00" stroke="#a8a468" stroke-width=".45" stroke-linejoin="round"/><circle cx="4" cy="4" r="1.84" fill="#f6f000"/></svg>
<svg class="a" style="left:194px;top:869px;" width="18" height="18" viewBox="0 0 18 18"><path d="M5 6l3-2h7l-3 2z" fill="#c8d8ec"/><path d="M7 6h5v11h-5z" fill="#8098c0"/><path d="M12 6l3-2v10l-3 3z" fill="#5a749c"/><path d="M1 6l3-3M17 3l-3 3" stroke="#1a3ab0" stroke-width="1.200"/><path d="M2 3h3v3" fill="none" stroke="#1a3ab0" stroke-width="1"/></svg>
<svg class="a" style="left:217px;top:869px;" width="18" height="18" viewBox="0 0 18 18"><path d="M1 7l3-2h9l-3 2z" fill="#c8d8ec"/><path d="M1 7h9v6h-9z" fill="#8098c0"/><path d="M10 7l3-2v6l-3 2z" fill="#4a6490"/><path d="M14 2v14" stroke="#1a3ab0" stroke-width="1.200" stroke-dasharray="3 1.500"/><path d="M12 3l2-2 2 2M12 15l2 2 2-2" fill="none" stroke="#1a3ab0" stroke-width="1"/></svg>
<svg class="a" style="left:243px;top:869px;" width="18" height="18" viewBox="0 0 18 18"><path d="M1 5v-3.500h3.500M13.500 1.500h3.500v3.500M17 13v3.500h-3.500M4.500 16.500h-3.500v-3.500" fill="none" stroke="#1a3ab0" stroke-width="1.200" stroke-dasharray="2.500 1"/><path d="M5 8l3-3h6l-3 3z" fill="#e0e8f4" stroke="#555" stroke-width=".6"/><path d="M5 8h6v6h-6z" fill="#c0cce0" stroke="#555" stroke-width=".6"/><path d="M11 8l3-3v6l-3 3z" fill="#90a0b8" stroke="#555" stroke-width=".6"/></svg>
<svg class="a" style="left:266px;top:869px;" width="18" height="18" viewBox="0 0 18 18"><path d="M1 5v-3.500h3.500M13.500 1.500h3.500v3.500M17 13v3.500h-3.500M4.500 16.500h-3.500v-3.500" fill="none" stroke="#1a3ab0" stroke-width="1.200" stroke-dasharray="2.500 1"/><path d="M5 6h5v11h-5z" fill="#9ab0d0"/><path d="M10 6h4v5h-4z" fill="#c0d0e8"/><path d="M10 6l2-2h4l-2 2z" fill="#d8e4f4"/><rect x="9" y="0.5" width="8.5" height="6" fill="#f2f2f2" stroke="#777" stroke-width=".9"/><rect x="9" y="0.5" width="8.5" height="2.200" fill="#2a48b8"/><polygon points="4.00,0.32 4.66,2.40 6.08,1.92 5.60,3.34 7.68,4.00 5.60,4.66 6.08,6.08 4.66,5.60 4.00,7.68 3.34,5.60 1.92,6.08 2.40,4.66 0.32,4.00 2.40,3.34 1.92,1.92 3.34,2.40" fill="#f2ea00" stroke="#a8a468" stroke-width=".45" stroke-linejoin="round"/><circle cx="4" cy="4" r="1.84" fill="#f6f000"/></svg>
<div class="a" style="left:290.2px;top:868px;width:1px;height:20px;background:#a8a8a8;"></div>
<svg class="a" style="left:297px;top:869px;" width="18" height="18" viewBox="0 0 18 18"><path d="M2 9h14v2h-14zM3 12h13v2h-13zM2 15h14v2h-14z" fill="#8a8a8a" stroke="#555" stroke-width=".5"/><path d="M3 8l3-2h8l2 2z" fill="#e8c030"/><rect x="8" y="0.5" width="9.5" height="7" fill="#f2f2f2" stroke="#777" stroke-width=".9"/><rect x="8" y="0.5" width="9.5" height="2.200" fill="#2a48b8"/><polygon points="4.50,0.44 5.23,2.74 6.80,2.20 6.26,3.77 8.56,4.50 6.26,5.23 6.80,6.80 5.23,6.26 4.50,8.56 3.77,6.26 2.20,6.80 2.74,5.23 0.44,4.50 2.74,3.77 2.20,2.20 3.77,2.74" fill="#f2ea00" stroke="#a8a468" stroke-width=".45" stroke-linejoin="round"/><circle cx="4.5" cy="4.5" r="2.03" fill="#f6f000"/></svg>
<svg class="a" style="left:321px;top:869px;" width="18" height="18" viewBox="0 0 18 18"><path d="M2 13v4M16 13v4M2 15h14" stroke="#111" stroke-width="1.200"/><text x="6.500" y="12.500" style="font-family:'Liberation Sans',sans-serif;font-size:8px;font-weight:bold" fill="#111">x</text><polygon points="6.00,0.24 6.77,2.65 8.41,2.09 7.85,3.73 10.26,4.50 7.85,5.27 8.41,6.91 6.77,6.35 6.00,8.76 5.23,6.35 3.59,6.91 4.15,5.27 1.74,4.50 4.15,3.73 3.59,2.09 5.23,2.65" fill="#f2ea00" stroke="#a8a468" stroke-width=".45" stroke-linejoin="round"/><circle cx="6" cy="4.5" r="2.13" fill="#f6f000"/></svg>
<svg class="a" style="left:343.8px;top:876px;" width="7.4" height="4.2" viewBox="0 0 7.4 4.2"><path d="M0 0h7.400l-3.700 4.200z" fill="#111"/></svg>
<svg class="a" style="left:356px;top:869px;" width="18" height="18" viewBox="0 0 18 18"><path d="M2 16l6-4h9" fill="none" stroke="#111" stroke-width="1.200"/><path d="M1.500 13v3.500h3.500" fill="none" stroke="#111" stroke-width="1.200"/><text x="8" y="11" style="font-family:'Liberation Sans',sans-serif;font-size:8px;font-weight:bold" fill="#111" textLength="9">xx</text><polygon points="6.00,0.24 6.77,2.65 8.41,2.09 7.85,3.73 10.26,4.50 7.85,5.27 8.41,6.91 6.77,6.35 6.00,8.76 5.23,6.35 3.59,6.91 4.15,5.27 1.74,4.50 4.15,3.73 3.59,2.09 5.23,2.65" fill="#f2ea00" stroke="#a8a468" stroke-width=".45" stroke-linejoin="round"/><circle cx="6" cy="4.5" r="2.13" fill="#f6f000"/></svg>
<svg class="a" style="left:380px;top:869px;" width="18" height="18" viewBox="0 0 18 18"><circle cx="8" cy="7" r="1.800" fill="#6a7a9a"/><path d="M8 8.500v4l-3 5M8 12.500l3 5M3 9l5 1 5-1" fill="none" stroke="#6a7a9a" stroke-width="1.800"/><rect x="8.5" y="0.5" width="9" height="6.5" fill="#f2f2f2" stroke="#777" stroke-width=".9"/><rect x="8.5" y="0.5" width="9" height="2.200" fill="#2a48b8"/><polygon points="4.00,0.63 4.70,2.82 6.19,2.31 5.68,3.80 7.87,4.50 5.68,5.20 6.19,6.69 4.70,6.18 4.00,8.37 3.30,6.18 1.81,6.69 2.32,5.20 0.13,4.50 2.32,3.80 1.81,2.31 3.30,2.82" fill="#f2ea00" stroke="#a8a468" stroke-width=".45" stroke-linejoin="round"/><circle cx="4" cy="4.5" r="1.94" fill="#f6f000"/></svg>
<svg class="a" style="left:405px;top:869px;" width="18" height="18" viewBox="0 0 18 18"><path d="M2 7h14v10h-14z" fill="#fff" stroke="#444" stroke-width="1.200"/><path d="M2 10.500h14" stroke="#444" stroke-width="1"/><path d="M5 8v3" stroke="#444" stroke-width="1.200"/><rect x="8" y="0.5" width="9.5" height="6.5" fill="#f2f2f2" stroke="#777" stroke-width=".9"/><rect x="8" y="0.5" width="9.5" height="2.200" fill="#2a48b8"/><polygon points="5.00,0.94 5.73,3.24 7.30,2.70 6.76,4.27 9.06,5.00 6.76,5.73 7.30,7.30 5.73,6.76 5.00,9.06 4.27,6.76 2.70,7.30 3.24,5.73 0.94,5.00 3.24,4.27 2.70,2.70 4.27,3.24" fill="#f2ea00" stroke="#a8a468" stroke-width=".45" stroke-linejoin="round"/><circle cx="5" cy="5" r="2.03" fill="#f6f000"/></svg>
<div class="a" style="left:428.5px;top:868px;width:1px;height:20px;background:#a8a8a8;"></div>
<svg class="a" style="left:435px;top:869px;" width="18" height="18" viewBox="0 0 18 18"><path d="M3 15l12-12" stroke="#111" stroke-width="1.200" stroke-dasharray="3 1.200"/><path d="M1.500 12.500l3 4M11 1.500l4 3" stroke="#111" stroke-width="1.200"/><circle cx="4.5" cy="15.5" r="1.3" fill="#e8101c"/><circle cx="15.5" cy="7" r="1.3" fill="#e8101c"/></svg>
<svg class="a" style="left:458.8px;top:876px;" width="7.4" height="4.2" viewBox="0 0 7.4 4.2"><path d="M0 0h7.400l-3.700 4.200z" fill="#111"/></svg>
<svg class="a" style="left:472px;top:869px;" width="18" height="18" viewBox="0 0 18 18"><text x="0" y="7" style="font-family:'Liberation Sans',sans-serif;font-size:8.500px;font-weight:bold" fill="#111">2</text><text x="9" y="17.500" style="font-family:'Liberation Sans',sans-serif;font-size:8.500px;font-weight:bold" fill="#111">6</text><rect x="1" y="11" width="3.500" height="6" fill="#4a80d8"/><path d="M6 4c4-1.500 7 0 8 4" fill="none" stroke="#4a80d8" stroke-width="1.600"/><path d="M11.500 7.500l3 3 2-4z" fill="#4a80d8"/></svg>
<svg class="a" style="left:495.3px;top:876px;" width="7.4" height="4.2" viewBox="0 0 7.4 4.2"><path d="M0 0h7.400l-3.700 4.200z" fill="#111"/></svg>
<div class="a" style="left:508.5px;top:868px;width:1px;height:20px;background:#a8a8a8;"></div>
<svg class="a" style="left:514px;top:869px;" width="18" height="18" viewBox="0 0 18 18"><path d="M3 2v14M9 2v14M15 2v14" stroke="#111" stroke-width="1.100"/><circle cx="9" cy="2.5" r="1.4" fill="#e8101c"/><circle cx="9" cy="16" r="1.4" fill="#e8101c"/></svg>
<svg class="a" style="left:538.5px;top:869px;" width="18" height="18" viewBox="0 0 18 18"><path d="M2 2l5 14M16 2l-5 14M9 2v14" stroke="#111" stroke-width="1.100"/><circle cx="9" cy="2.5" r="1.4" fill="#e8101c"/><circle cx="9" cy="16" r="1.4" fill="#e8101c"/></svg>
<svg class="a" style="left:564px;top:875px;" width="8" height="6" viewBox="0 0 8 6"><path d="M0.500 0.500l2.500 2.500-2.500 2.500M4.500 0.500l2.500 2.500-2.500 2.500" fill="none" stroke="#555" stroke-width=".9"/></svg>
<svg class="a" style="left:595px;top:869px;" width="18" height="18" viewBox="0 0 18 18"><path d="M3.500 2v13.500h12M3.500 10h5v5.500" fill="none" stroke="#666" stroke-width="1.100"/></svg>
<svg class="a" style="left:627px;top:869px;" width="18" height="18" viewBox="0 0 18 18"><rect x="1" y="4" width="1.300" height="1.300" fill="#666"/><rect x="1" y="7" width="1.300" height="1.300" fill="#666"/><rect x="1" y="10" width="1.300" height="1.300" fill="#666"/><rect x="1" y="13" width="1.300" height="1.300" fill="#666"/><rect x="1" y="16" width="1.300" height="1.300" fill="#666"/><rect x="4" y="4" width="1.300" height="1.300" fill="#666"/><rect x="4" y="7" width="1.300" height="1.300" fill="#666"/><rect x="4" y="10" width="1.300" height="1.300" fill="#666"/><rect x="4" y="13" width="1.300" height="1.300" fill="#666"/><rect x="4" y="16" width="1.300" height="1.300" fill="#666"/><rect x="7" y="4" width="1.300" height="1.300" fill="#666"/><rect x="7" y="7" width="1.300" height="1.300" fill="#666"/><rect x="7" y="10" width="1.300" height="1.300" fill="#666"/><rect x="7" y="13" width="1.300" height="1.300" fill="#666"/><rect x="7" y="16" width="1.300" height="1.300" fill="#666"/><rect x="10" y="4" width="1.300" height="1.300" fill="#666"/><rect x="10" y="7" width="1.300" height="1.300" fill="#666"/><rect x="10" y="10" width="1.300" height="1.300" fill="#666"/><rect x="10" y="13" width="1.300" height="1.300" fill="#666"/><rect x="10" y="16" width="1.300" height="1.300" fill="#666"/><rect x="13" y="4" width="1.300" height="1.300" fill="#666"/><rect x="13" y="7" width="1.300" height="1.300" fill="#666"/><rect x="13" y="10" width="1.300" height="1.300" fill="#666"/><rect x="13" y="13" width="1.300" height="1.300" fill="#666"/><rect x="13" y="16" width="1.300" height="1.300" fill="#666"/><path d="M7.58 4.5c2.125 -4.08 6.715 -4.08 8.84 0c-2.125 4.08 -6.715 4.08 -8.84 0z" fill="#1c1c84"/><circle cx="12" cy="4.5" r="1.955" fill="#7c84cc"/><circle cx="12" cy="4.5" r="1.02" fill="#10104c"/></svg>
<svg class="a" style="left:658px;top:869px;" width="18" height="18" viewBox="0 0 18 18"><rect x="2" y="6" width="1.300" height="1.300" fill="#666"/><rect x="2" y="9" width="1.300" height="1.300" fill="#666"/><rect x="2" y="12" width="1.300" height="1.300" fill="#666"/><rect x="2" y="15" width="1.300" height="1.300" fill="#666"/><rect x="5" y="6" width="1.300" height="1.300" fill="#666"/><rect x="5" y="9" width="1.300" height="1.300" fill="#666"/><rect x="5" y="12" width="1.300" height="1.300" fill="#666"/><rect x="5" y="15" width="1.300" height="1.300" fill="#666"/><rect x="8" y="6" width="1.300" height="1.300" fill="#666"/><rect x="8" y="9" width="1.300" height="1.300" fill="#666"/><rect x="8" y="12" width="1.300" height="1.300" fill="#666"/><rect x="8" y="15" width="1.300" height="1.300" fill="#666"/><rect x="11" y="6" width="1.300" height="1.300" fill="#666"/><rect x="11" y="9" width="1.300" height="1.300" fill="#666"/><rect x="11" y="12" width="1.300" height="1.300" fill="#666"/><rect x="11" y="15" width="1.300" height="1.300" fill="#666"/><rect x="14" y="6" width="1.300" height="1.300" fill="#666"/><rect x="14" y="9" width="1.300" height="1.300" fill="#666"/><rect x="14" y="12" width="1.300" height="1.300" fill="#666"/><rect x="14" y="15" width="1.300" height="1.300" fill="#666"/><rect x="8" y="1" width="9.5" height="7" fill="#f2f2f2" stroke="#777" stroke-width=".9"/><rect x="8" y="1" width="9.5" height="2.200" fill="#2a48b8"/><polygon points="4.50,0.94 5.23,3.24 6.80,2.70 6.26,4.27 8.56,5.00 6.26,5.73 6.80,7.30 5.23,6.76 4.50,9.06 3.77,6.76 2.20,7.30 2.74,5.73 0.44,5.00 2.74,4.27 2.20,2.70 3.77,3.24" fill="#f2ea00" stroke="#a8a468" stroke-width=".45" stroke-linejoin="round"/><circle cx="4.5" cy="5" r="2.03" fill="#f6f000"/></svg>
<div class="a" style="left:680px;top:866.5px;width:23px;height:23px;background:#cce4f8;border:1px solid #98c8f0;border-radius:3px;"></div>
<svg class="a" style="left:682.5px;top:869px;" width="18" height="18" viewBox="0 0 18 18"><rect x="1" y="5" width="1.300" height="1.300" fill="#555"/><rect x="1" y="8" width="1.300" height="1.300" fill="#555"/><rect x="1" y="11" width="1.300" height="1.300" fill="#555"/><rect x="1" y="14" width="1.300" height="1.300" fill="#555"/><rect x="1" y="17" width="1.300" height="1.300" fill="#555"/><rect x="4" y="5" width="1.300" height="1.300" fill="#555"/><rect x="4" y="8" width="1.300" height="1.300" fill="#555"/><rect x="4" y="11" width="1.300" height="1.300" fill="#555"/><rect x="4" y="14" width="1.300" height="1.300" fill="#555"/><rect x="4" y="17" width="1.300" height="1.300" fill="#555"/><rect x="7" y="5" width="1.300" height="1.300" fill="#555"/><rect x="7" y="8" width="1.300" height="1.300" fill="#555"/><rect x="7" y="11" width="1.300" height="1.300" fill="#555"/><rect x="7" y="14" width="1.300" height="1.300" fill="#555"/><rect x="7" y="17" width="1.300" height="1.300" fill="#555"/><rect x="10" y="5" width="1.300" height="1.300" fill="#555"/><rect x="10" y="8" width="1.300" height="1.300" fill="#555"/><rect x="10" y="11" width="1.300" height="1.300" fill="#555"/><rect x="10" y="14" width="1.300" height="1.300" fill="#555"/><rect x="10" y="17" width="1.300" height="1.300" fill="#555"/><rect x="13" y="5" width="1.300" height="1.300" fill="#555"/><rect x="13" y="8" width="1.300" height="1.300" fill="#555"/><rect x="13" y="11" width="1.300" height="1.300" fill="#555"/><rect x="13" y="14" width="1.300" height="1.300" fill="#555"/><rect x="13" y="17" width="1.300" height="1.300" fill="#555"/><rect x="1.500" y="5.500" width="12" height="12" fill="#b8d4f0" opacity=".5"/><path d="M7.58 4.5c2.125 -4.08 6.715 -4.08 8.84 0c-2.125 4.08 -6.715 4.08 -8.84 0z" fill="#1c1c84"/><circle cx="12" cy="4.5" r="1.955" fill="#7c84cc"/><circle cx="12" cy="4.5" r="1.02" fill="#10104c"/></svg>
<svg class="a" style="left:712.5px;top:869px;" width="18" height="18" viewBox="0 0 18 18"><rect x="3" y="4.500" width="12" height="12" fill="none" stroke="#444" stroke-width="1.100" stroke-dasharray="1.200 1.600"/><polygon points="5.00,0.74 5.77,3.15 7.41,2.59 6.85,4.23 9.26,5.00 6.85,5.77 7.41,7.41 5.77,6.85 5.00,9.26 4.23,6.85 2.59,7.41 3.15,5.77 0.74,5.00 3.15,4.23 2.59,2.59 4.23,3.15" fill="#f2ea00" stroke="#a8a468" stroke-width=".45" stroke-linejoin="round"/><circle cx="5" cy="5" r="2.13" fill="#f6f000"/></svg>
<div class="a" style="left:735px;top:866.5px;width:23px;height:23px;background:#cce4f8;border:1px solid #98c8f0;border-radius:3px;"></div>
<svg class="a" style="left:737.5px;top:869px;" width="18" height="18" viewBox="0 0 18 18"><rect x="2" y="5.500" width="12" height="11.500" fill="none" stroke="#444" stroke-width="1.100" stroke-dasharray="1.200 1.600"/><path d="M7.58 4.5c2.125 -4.08 6.715 -4.08 8.84 0c-2.125 4.08 -6.715 4.08 -8.84 0z" fill="#1c1c84"/><circle cx="12" cy="4.5" r="1.955" fill="#7c84cc"/><circle cx="12" cy="4.5" r="1.02" fill="#10104c"/></svg>
<div class="a" style="left:772px;top:866.5px;width:23px;height:23px;background:#cce4f8;border:1px solid #98c8f0;border-radius:3px;"></div>
<svg class="a" style="left:774.5px;top:869px;" width="18" height="18" viewBox="0 0 18 18"><rect x="1" y="3" width="1.300" height="1.300" fill="#666"/><rect x="1" y="6" width="1.300" height="1.300" fill="#666"/><rect x="1" y="9" width="1.300" height="1.300" fill="#666"/><rect x="1" y="12" width="1.300" height="1.300" fill="#666"/><rect x="1" y="15" width="1.300" height="1.300" fill="#666"/><rect x="4" y="3" width="1.300" height="1.300" fill="#666"/><rect x="4" y="6" width="1.300" height="1.300" fill="#666"/><rect x="4" y="9" width="1.300" height="1.300" fill="#666"/><rect x="4" y="12" width="1.300" height="1.300" fill="#666"/><rect x="4" y="15" width="1.300" height="1.300" fill="#666"/><rect x="7" y="3" width="1.300" height="1.300" fill="#666"/><rect x="7" y="6" width="1.300" height="1.300" fill="#666"/><rect x="7" y="9" width="1.300" height="1.300" fill="#666"/><rect x="7" y="12" width="1.300" height="1.300" fill="#666"/><rect x="7" y="15" width="1.300" height="1.300" fill="#666"/><rect x="10" y="3" width="1.300" height="1.300" fill="#666"/><rect x="10" y="6" width="1.300" height="1.300" fill="#666"/><rect x="10" y="9" width="1.300" height="1.300" fill="#666"/><rect x="10" y="12" width="1.300" height="1.300" fill="#666"/><rect x="10" y="15" width="1.300" height="1.300" fill="#666"/><rect x="13" y="3" width="1.300" height="1.300" fill="#666"/><rect x="13" y="6" width="1.300" height="1.300" fill="#666"/><rect x="13" y="9" width="1.300" height="1.300" fill="#666"/><rect x="13" y="12" width="1.300" height="1.300" fill="#666"/><rect x="13" y="15" width="1.300" height="1.300" fill="#666"/><path d="M8.86 10.8v-3.72c0 -4.96 7.44 -4.96 7.44 0v3.72" fill="none" stroke="#9a90a8" stroke-width="2.108"/><rect x="7.806" y="9.56" width="2.108" height="1.86" fill="#e02818"/><rect x="15.246" y="9.56" width="2.108" height="1.86" fill="#1838c8"/><path d="M8 12l3 3M11 12l-3 3" stroke="#e02818" stroke-width="1.200"/></svg>
<div class="a" style="left:796px;top:866.5px;width:23px;height:23px;background:#cce4f8;border:1px solid #98c8f0;border-radius:3px;"></div>
<svg class="a" style="left:798.5px;top:869px;" width="18" height="18" viewBox="0 0 18 18"><path d="M3 16v-6c0 -8 12 -8 12 0v6" fill="none" stroke="#9a90a8" stroke-width="3.4"/><rect x="1.3" y="14" width="3.4" height="3" fill="#e02818"/><rect x="13.3" y="14" width="3.4" height="3" fill="#1838c8"/></svg>
<div class="a" style="left:820px;top:866.5px;width:23px;height:23px;background:#cce4f8;border:1px solid #98c8f0;border-radius:3px;"></div>
<svg class="a" style="left:822.5px;top:869px;" width="18" height="18" viewBox="0 0 18 18"><rect x="4.500" y="5" width="9" height="9" fill="none" stroke="#444" stroke-width="1.100"/></svg>
<div class="a" style="left:844px;top:866.5px;width:23px;height:23px;background:#cce4f8;border:1px solid #98c8f0;border-radius:3px;"></div>
<svg class="a" style="left:846.5px;top:869px;" width="18" height="18" viewBox="0 0 18 18"><circle cx="9" cy="9.500" r="5.200" fill="none" stroke="#666" stroke-width="1.100"/><path d="M5.300 5.800l7.400 7.400M12.700 5.800l-7.400 7.400" stroke="#666" stroke-width="1.100"/></svg>
<svg class="a" style="left:869px;top:869px;" width="18" height="18" viewBox="0 0 18 18"><rect x="4.500" y="5" width="9" height="9" fill="none" stroke="#444" stroke-width="1.100"/><path d="M4.500 5l9 9M13.500 5l-9 9" stroke="#444" stroke-width="1"/></svg>
<svg class="a" style="left:893px;top:869px;" width="18" height="18" viewBox="0 0 18 18"><path d="M4.500 3v11.500h11M4.500 9h5.500v5.500" fill="none" stroke="#444" stroke-width="1.100"/></svg>
<svg class="a" style="left:917px;top:869px;" width="18" height="18" viewBox="0 0 18 18"><path d="M3 15l12-11" stroke="#555" stroke-width="1.100"/><path d="M7.500 9l3 2.500" stroke="#555" stroke-width="1"/></svg>
<svg class="a" style="left:941.5px;top:869px;" width="18" height="18" viewBox="0 0 18 18"><path d="M3 13l9-9M7 16l9-9" stroke="#555" stroke-width="1.100"/></svg>
<svg class="a" style="left:965px;top:869px;" width="18" height="18" viewBox="0 0 18 18"><circle cx="9" cy="11" r="4.800" fill="none" stroke="#555" stroke-width="1.100"/><path d="M2.500 5h13" stroke="#555" stroke-width="1.200"/></svg>
<svg class="a" style="left:989.5px;top:869px;" width="18" height="18" viewBox="0 0 18 18"><circle cx="9" cy="9.500" r="6" fill="none" stroke="#555" stroke-width="1.100"/><circle cx="9" cy="9.500" r="4" fill="none" stroke="#777" stroke-width="1"/><path d="M5 6l8 7M5 13l8-7" stroke="#999" stroke-width=".7"/></svg>
<svg class="a" style="left:1014px;top:869px;" width="18" height="18" viewBox="0 0 18 18"><path d="M3 14l11-10M6 9l4 5M8 7.500l4 5M10 6l4 5M5 15l2 2" stroke="#555" stroke-width="1"/></svg>
<svg class="a" style="left:1037px;top:869px;" width="18" height="18" viewBox="0 0 18 18"><path d="M3 14l12-10M5 4l8 10" stroke="#555" stroke-width="1"/><path d="M8 5l4 2-3 2z" fill="#333"/></svg>
<svg class="a" style="left:1061px;top:869px;" width="18" height="18" viewBox="0 0 18 18"><path d="M3 14l12-10M5 5l8 8" stroke="#666" stroke-width="1" stroke-dasharray="3 1"/><path d="M4 6l3 1" stroke="#333" stroke-width="1.200"/></svg>
<svg class="a" style="left:1085px;top:869px;" width="18" height="18" viewBox="0 0 18 18"><rect x="4" y="13" width="1.200" height="1.200" fill="#666"/><rect x="6" y="10" width="1.200" height="1.200" fill="#666"/><rect x="8" y="13" width="1.200" height="1.200" fill="#666"/><rect x="9" y="7" width="1.200" height="1.200" fill="#666"/><rect x="11" y="10" width="1.200" height="1.200" fill="#666"/><rect x="12" y="4" width="1.200" height="1.200" fill="#666"/><rect x="13" y="7" width="1.200" height="1.200" fill="#666"/><rect x="14" y="12" width="1.200" height="1.200" fill="#666"/><rect x="6" y="15" width="1.200" height="1.200" fill="#666"/><rect x="10" y="15" width="1.200" height="1.200" fill="#666"/></svg>
<div class="a" style="left:1108px;top:866.5px;width:23px;height:23px;background:#cce4f8;border:1px solid #98c8f0;border-radius:3px;"></div>
<svg class="a" style="left:1110.5px;top:869px;" width="18" height="18" viewBox="0 0 18 18"><rect x="2.5" y="3" width="1.300" height="1.300" fill="#444"/><rect x="2.5" y="5.5" width="1.300" height="1.300" fill="#444"/><rect x="2.5" y="8" width="1.300" height="1.300" fill="#444"/><rect x="2.5" y="10.5" width="1.300" height="1.300" fill="#444"/><rect x="2.5" y="13" width="1.300" height="1.300" fill="#444"/><rect x="2.5" y="15.5" width="1.300" height="1.300" fill="#444"/><rect x="5" y="3" width="1.300" height="1.300" fill="#444"/><rect x="5" y="5.5" width="1.300" height="1.300" fill="#444"/><rect x="5" y="8" width="1.300" height="1.300" fill="#444"/><rect x="5" y="10.5" width="1.300" height="1.300" fill="#444"/><rect x="5" y="13" width="1.300" height="1.300" fill="#444"/><rect x="5" y="15.5" width="1.300" height="1.300" fill="#444"/><rect x="7.5" y="3" width="1.300" height="1.300" fill="#444"/><rect x="7.5" y="5.5" width="1.300" height="1.300" fill="#444"/><rect x="7.5" y="8" width="1.300" height="1.300" fill="#444"/><rect x="7.5" y="10.5" width="1.300" height="1.300" fill="#444"/><rect x="7.5" y="13" width="1.300" height="1.300" fill="#444"/><rect x="7.5" y="15.5" width="1.300" height="1.300" fill="#444"/><rect x="10" y="3" width="1.300" height="1.300" fill="#444"/><rect x="10" y="5.5" width="1.300" height="1.300" fill="#444"/><rect x="10" y="8" width="1.300" height="1.300" fill="#444"/><rect x="10" y="10.5" width="1.300" height="1.300" fill="#444"/><rect x="10" y="13" width="1.300" height="1.300" fill="#444"/><rect x="10" y="15.5" width="1.300" height="1.300" fill="#444"/><rect x="12.5" y="3" width="1.300" height="1.300" fill="#444"/><rect x="12.5" y="5.5" width="1.300" height="1.300" fill="#444"/><rect x="12.5" y="8" width="1.300" height="1.300" fill="#444"/><rect x="12.5" y="10.5" width="1.300" height="1.300" fill="#444"/><rect x="12.5" y="13" width="1.300" height="1.300" fill="#444"/><rect x="12.5" y="15.5" width="1.300" height="1.300" fill="#444"/><rect x="15" y="3" width="1.300" height="1.300" fill="#444"/><rect x="15" y="5.5" width="1.300" height="1.300" fill="#444"/><rect x="15" y="8" width="1.300" height="1.300" fill="#444"/><rect x="15" y="10.5" width="1.300" height="1.300" fill="#444"/><rect x="15" y="13" width="1.300" height="1.300" fill="#444"/><rect x="15" y="15.5" width="1.300" height="1.300" fill="#444"/></svg>
<div class="a" style="left:1132.5px;top:866.5px;width:22.5px;height:23px;background:#cce4f8;border:1px solid #98c8f0;border-radius:3px;"></div>
<svg class="a" style="left:1134.7px;top:869px;" width="18" height="18" viewBox="0 0 18 18"><rect x="3" y="3.500" width="12.500" height="12.500" fill="none" stroke="#333" stroke-width="1.200" stroke-dasharray="1.200 1.500"/></svg>
<div class="a" style="left:1156.5px;top:866.5px;width:22.5px;height:23px;background:#cce4f8;border:1px solid #98c8f0;border-radius:3px;"></div>
<svg class="a" style="left:1158.7px;top:869px;" width="18" height="18" viewBox="0 0 18 18"><path d="M3 8l3-4h10l-3 4zM3 11.500l3-4h10l-3 4zM3 15l3-4h10l-3 4z" fill="#e8e8e8" stroke="#555" stroke-width="1"/></svg>
<div class="a" style="left:1180.5px;top:866.5px;width:22.5px;height:23px;background:#cce4f8;border:1px solid #98c8f0;border-radius:3px;"></div>
<svg class="a" style="left:1183px;top:869px;" width="18" height="18" viewBox="0 0 18 18"><path d="M0 9.500h18" stroke="#111" stroke-width="3.500"/><path d="M1 6l3 7M17 6l-3 7" stroke="#e02818" stroke-width="1"/></svg>
<div class="a" style="left:279px;top:597px;width:126.5px;height:21px;background:#e6e8f4;"></div>
<svg class="a" style="left:284px;top:600px;" width="14" height="14" viewBox="0 0 14 14"><rect x="0.600" y="0.600" width="12.800" height="12.800" fill="#c4c4c4" stroke="#505050" stroke-width="1.200"/><rect x="1.200" y="1.200" width="11.600" height="2" fill="#3050c0"/><rect x="1.500" y="1.500" width="1.200" height="1.200" fill="#fff"/><path d="M2 5.500h10M2 8h10M2 10.500h10" stroke="#eee" stroke-width="1.300"/><path d="M5 4v8M9 4v8" stroke="#c4c4c4" stroke-width=".8"/><path d="M2 11.500c1.500-10 3.500-10 5-4 1 2.500 2.500 3.500 5 4" fill="none" stroke="#f08030" stroke-width="1.100"/></svg>
<span class="t" style="left:303.00px;top:600px;font-size:11.25px;color:#101030;letter-spacing:-0.017px;">Spectral Analysis</span>
<svg class="a" style="left:391px;top:605.5px;" width="10" height="6" viewBox="0 0 10 6"><path d="M0.700 0.700l4.300 4.300 4.300-4.300" fill="none" stroke="#444" stroke-width="1.100"/></svg>
<div class="a" style="left:406px;top:597px;width:14.5px;height:21px;background:#e6e8f4;"></div>
<svg class="a" style="left:410px;top:604px;" width="6" height="8" viewBox="0 0 6 8"><path d="M5.500 0v8l-5-4z" fill="#111"/></svg>
<div class="a" style="left:422px;top:597px;width:14.5px;height:21px;background:#d0d0d0;"></div>
<svg class="a" style="left:426.5px;top:604px;" width="6" height="8" viewBox="0 0 6 8"><path d="M0.500 0v8l5-4z" fill="#666"/></svg>
<div class="a" style="left:440px;top:598px;width:1px;height:20px;background:#a8a8a8;"></div>
<div class="a" style="left:445.5px;top:597px;width:171px;height:21px;background:#e6e8f4;"></div>
<svg class="a" style="left:454.5px;top:600px;" width="14" height="16" viewBox="0 0 14 16"><rect x="1.500" y="1" width="10" height="14" fill="#fff" stroke="#555" stroke-width="1.200"/><path d="M1.500 4.500h10M1.500 11.500h10" stroke="#555" stroke-width="1.200"/><rect x="2" y="6.500" width="9" height="3" fill="#e86018"/></svg>
<span class="t" style="left:472.70px;top:600px;font-size:11px;color:#101030;letter-spacing:0.048px;">Results by Stories</span>
<svg class="a" style="left:602.5px;top:605.5px;" width="10" height="6" viewBox="0 0 10 6"><path d="M0.700 0.700l4.300 4.300 4.300-4.300" fill="none" stroke="#444" stroke-width="1.100"/></svg>
<div class="a" style="left:617px;top:597px;width:15.7px;height:21px;background:#e6e8f4;"></div>
<svg class="a" style="left:623px;top:604px;" width="6" height="8" viewBox="0 0 6 8"><path d="M5.500 0v8l-5-4z" fill="#111"/></svg>
<div class="a" style="left:634px;top:597px;width:15px;height:21px;background:#d0d0d0;"></div>
<svg class="a" style="left:639px;top:604px;" width="6" height="8" viewBox="0 0 6 8"><path d="M0.500 0v8l5-4z" fill="#666"/></svg>
<div class="a" style="left:652.5px;top:598px;width:1px;height:20px;background:#a8a8a8;"></div>
<div class="a" style="left:658.5px;top:597px;width:168.5px;height:21px;background:#e6e8f4;"></div>
<div class="a" style="left:662.5px;top:603px;width:11px;height:10.5px;background:#3a600c;"></div>
<div class="a" style="left:676.5px;top:603px;width:10.5px;height:10.5px;background:#c4fcfc;"></div>
<div class="a" style="left:690.5px;top:601.5px;width:30px;height:13px;background:#9c5620;"></div>
<span class="t" style="left:699.00px;top:601px;font-size:10px;color:#fff;letter-spacing:-0.170px;">Qe</span>
<span class="t" style="left:725.00px;top:601px;font-size:10px;color:#101030;letter-spacing:-0.115px;">LC5</span>
<div class="a" style="left:749.5px;top:598px;width:1px;height:20px;background:#f4f4fa;"></div>
<span class="t" style="left:757.00px;top:600px;font-size:11px;color:#101030;letter-spacing:-0.041px;">RSA - w/...</span>
<svg class="a" style="left:812.5px;top:605.5px;" width="10" height="6" viewBox="0 0 10 6"><path d="M0.700 0.700l4.300 4.300 4.300-4.300" fill="none" stroke="#444" stroke-width="1.100"/></svg>
<div class="a" style="left:828px;top:597px;width:14.5px;height:21px;background:#d0d0d0;"></div>
<svg class="a" style="left:832px;top:604px;" width="6" height="8" viewBox="0 0 6 8"><path d="M5.500 0v8l-5-4z" fill="#555"/></svg>
<div class="a" style="left:844.5px;top:597px;width:14.5px;height:21px;background:#d0d0d0;"></div>
<svg class="a" style="left:849px;top:604px;" width="6" height="8" viewBox="0 0 6 8"><path d="M0.500 0v8l5-4z" fill="#555"/></svg>
<div class="a" style="left:862.5px;top:598px;width:1px;height:20px;background:#a8a8a8;"></div>
<div class="a" style="left:867.5px;top:596px;width:24px;height:23.5px;background:#cce4f8;border:1px solid #98c8f0;border-radius:3px;"></div>
<div class="a" style="left:893px;top:596px;width:24px;height:23.5px;background:#cce4f8;border:1px solid #98c8f0;border-radius:3px;"></div>
<svg class="a" style="left:870.5px;top:598.5px;" width="18" height="18" viewBox="0 0 18 18"><rect x="6" y="1.500" width="10" height="7" fill="#f0f0f0" stroke="#555" stroke-width="1"/><path d="M2 5c3 0 7 2 7 11" fill="none" stroke="#2a4ab8" stroke-width="1.600"/><path d="M6 13l3 4 3-4" fill="none" stroke="#2a4ab8" stroke-width="1.600"/><path d="M2 3v4" stroke="#2a4ab8" stroke-width="1.200"/></svg>
<svg class="a" style="left:896px;top:598.5px;" width="18" height="18" viewBox="0 0 18 18"><rect x="6" y="1.500" width="10" height="7" fill="#f0f0f0" stroke="#555" stroke-width="1"/><path d="M9 7c-4 0-6 3-5 8" fill="none" stroke="#2a4ab8" stroke-width="1.600"/><path d="M1.500 12l3 4.500 4-3" fill="none" stroke="#2a4ab8" stroke-width="1.600"/></svg>
<div class="a" style="left:921.3px;top:598px;width:1px;height:20px;background:#a8a8a8;"></div>
<svg class="a" style="left:929px;top:598.5px;" width="18" height="18" viewBox="0 0 18 18"><path d="M3 11.500h15v-5.500z" fill="#d82a20"/><path d="M0 11.200h10l-10 4z" fill="#1a3a9a"/><path d="M5.8 4.5c2.5 -4.8 7.9 -4.8 10.4 0c-2.5 4.8 -7.9 4.8 -10.4 0z" fill="#1c1c84"/><circle cx="11" cy="4.5" r="2.3" fill="#7c84cc"/><circle cx="11" cy="4.5" r="1.2" fill="#10104c"/></svg>
<svg class="a" style="left:956px;top:598.5px;" width="18" height="18" viewBox="0 0 18 18"><text x="0.500" y="6.500" style="font-family:'Liberation Sans',sans-serif;font-size:8px;font-weight:bold" fill="#888" textLength="17" lengthAdjust="spacingAndGlyphs">x.xx</text><path d="M0.500 15.500h17v-6z" fill="#a8a8a8"/></svg>
<div class="a" style="left:980.2px;top:598px;width:1px;height:20px;background:#a8a8a8;"></div>
<svg class="a" style="left:988px;top:598.5px;" width="18" height="18" viewBox="0 0 18 18"><rect x="0.500" y="1" width="17" height="16.5" fill="#c4c4c4" stroke="#8a8a8a" stroke-width="1"/><rect x="0.500" y="1" width="17" height="3" fill="#8a8a8a"/><path d="M0.500 8.5h17M0.500 13h17M6 4v13.5M12 4v13.5" stroke="#f4f4f4" stroke-width="1"/></svg>
<svg class="a" style="left:1015px;top:598.5px;" width="18" height="18" viewBox="0 0 18 18"><rect x="0.500" y="7" width="17" height="10.5" fill="#e4e4e4" stroke="#b4b4b4" stroke-width="1"/><rect x="0.500" y="7" width="17" height="3" fill="#b4b4b4"/><path d="M0.500 12.5h17M0.500 15h17M6 10v7.5M12 10v7.5" stroke="#f4f4f4" stroke-width="1"/><path d="M4 2l10 3" stroke="#bbb" stroke-width="1.100"/><circle cx="4" cy="2" r="1.400" fill="#bbb"/><circle cx="14" cy="5" r="1.400" fill="#bbb"/></svg>
<svg class="a" style="left:1040px;top:598.5px;" width="18" height="18" viewBox="0 0 18 18"><rect x="0.500" y="7" width="17" height="10.5" fill="#e4e4e4" stroke="#b4b4b4" stroke-width="1"/><rect x="0.500" y="7" width="17" height="3" fill="#b4b4b4"/><path d="M0.500 12.5h17M0.500 15h17M6 10v7.5M12 10v7.5" stroke="#f4f4f4" stroke-width="1"/><path d="M4 2l10 3" stroke="#bbb" stroke-width="1.100"/><circle cx="4" cy="2" r="1.400" fill="#bbb"/><circle cx="14" cy="5" r="1.400" fill="#bbb"/></svg>
<div class="a" style="left:1064.5px;top:598px;width:1px;height:20px;background:#a8a8a8;"></div>
<div class="a" style="left:1070px;top:596px;width:24.5px;height:23.5px;background:#cce4f8;border:1px solid #98c8f0;border-radius:3px;"></div>
<svg class="a" style="left:1073.5px;top:598.5px;" width="18" height="18" viewBox="0 0 18 18"><path d="M3.500 1v16h13" stroke="#888" stroke-width="1" fill="none"/><rect x="4" y="1.500" width="7" height="2.600" fill="#f0a8a8"/><rect x="4" y="5" width="4" height="2.600" fill="#98dca8"/><rect x="4" y="8.500" width="10" height="2.600" fill="#f0a8a8"/><rect x="4" y="12" width="6" height="2.600" fill="#98dca8"/><rect x="4" y="14.800" width="12" height="1.700" fill="#98dca8"/></svg>
<div class="a" style="left:1098.5px;top:598px;width:1px;height:20px;background:#a8a8a8;"></div>
<svg class="a" style="left:1106px;top:598.5px;" width="18" height="18" viewBox="0 0 18 18"><rect x="0.500" y="2" width="17" height="15" fill="#e8e8e8" stroke="#999" stroke-width="1"/><path d="M0.500 7h17M0.500 12h17M6 2v15M12 2v15" stroke="#aaa" stroke-width="1"/></svg>
<div class="a" style="left:1131.5px;top:598px;width:1px;height:20px;background:#a8a8a8;"></div>
<svg class="a" style="left:1139px;top:598.5px;" width="18" height="18" viewBox="0 0 18 18"><path d="M4 1h9l4 4v12h-13z" fill="#fff" stroke="#555" stroke-width="1"/><rect x="0.500" y="3.500" width="9" height="8" fill="#1a8a3a"/><path d="M2.500 5l5 5M7.500 5l-5 5" stroke="#fff" stroke-width="1.400"/><path d="M10.500 8h5M10.500 10.500h5M6 13h9.500M6 15h9.500" stroke="#58b878" stroke-width="1"/><path d="M8.500 14l3 3.500 3-3.500" fill="#1a8a3a"/></svg>
<div class="a" style="left:1162.5px;top:595px;width:1px;height:26px;background:#e0e0e0;"></div>
<svg class="a" style="left:1169px;top:598.5px;" width="18" height="18" viewBox="0 0 18 18"><path d="M0.500 5.500h13l-5 6v6l-3-1.500v-4.500z" fill="#5b8fd8"/><rect x="8" y="0.5" width="9.5" height="7" fill="#f2f2f2" stroke="#777" stroke-width=".9"/><rect x="8" y="0.5" width="9.5" height="2.200" fill="#2a48b8"/></svg>
<svg class="a" style="left:1195px;top:604.5px;" width="8" height="6" viewBox="0 0 8 6"><path d="M0.500 0.500l2.500 2.500-2.500 2.500M4.500 0.500l2.500 2.500-2.500 2.500" fill="none" stroke="#555" stroke-width=".9"/></svg>
<svg class="a" style="left:1166px;top:558px;" width="12" height="11" viewBox="0 0 12 11"><rect x="3.500" y="0.500" width="7" height="6" fill="none" stroke="#222" stroke-width="1.200"/><rect x="0.500" y="3.500" width="7" height="6" fill="#d9e5f4" stroke="#222" stroke-width="1.200"/></svg>
<svg class="a" style="left:1187px;top:559px;" width="10" height="10" viewBox="0 0 10 10"><path d="M1 1l8 8M9 1l-8 8" stroke="#222" stroke-width="1.600"/></svg>
<svg class="a" style="left:235px;top:108px;" width="12" height="11" viewBox="0 0 12 11"><rect x="3.500" y="0.500" width="7" height="6" fill="none" stroke="#222" stroke-width="1.200"/><rect x="0.500" y="3.500" width="7" height="6" fill="#d9e5f4" stroke="#222" stroke-width="1.200"/></svg>
<svg class="a" style="left:256.5px;top:109px;" width="9" height="9" viewBox="0 0 9 9"><path d="M1 1l7 7M8 1l-7 7" stroke="#222" stroke-width="1.600"/></svg>
<svg class="a" style="left:1152px;top:31px;" width="48" height="12" viewBox="0 0 48 12"><path d="M4 8.500h7" stroke="#222" stroke-width="1.600"/><rect x="25.500" y="1" width="6" height="5" fill="none" stroke="#222" stroke-width="1.200"/><rect x="22.500" y="4" width="6" height="5" fill="#f5f5f5" stroke="#222" stroke-width="1.200"/><path d="M40.500 2l7 7M47.500 2l-7 7" stroke="#222" stroke-width="1.700"/></svg>
<svg class="a" style="left:854px;top:30px;" width="18" height="13" viewBox="0 0 18 13"><path d="M0.500 2h9M0.500 6h7M0.500 10h9" stroke="#888" stroke-width="1.200"/><circle cx="12" cy="5.500" r="3" fill="none" stroke="#888" stroke-width="1.200"/><path d="M14 8l3 3" stroke="#888" stroke-width="1.400"/></svg>
<svg class="a" style="left:6px;top:1px;" width="20" height="20" viewBox="0 0 20 20"><path d="M3.500 8l8-6 8 4c-3 3-5 7-6 11l-5-3z" fill="#4a7cc8"/><path d="M6 7l7-4M8.500 8.500l8-4.500M10 11l8-4M9 3.500l5 10M12 2.500l4 9" stroke="#a8c8f0" stroke-width=".8" fill="none"/><path d="M3.500 8l8-6 8 4" fill="none" stroke="#2a5090" stroke-width=".8"/><text x="3" y="17.300" style="font-family:'Liberation Sans',sans-serif;font-size:15.500px;font-weight:bold" fill="#f4c81c" stroke="#a88410" stroke-width=".7">6</text></svg>
<svg class="a" style="left:1px;top:31px;" width="16" height="12" viewBox="0 0 16 12"><rect x="0" y="0" width="16" height="12" fill="#232c78"/><path d="M0 8h16" stroke="#fff" stroke-width="1.500"/><path d="M4.500 0v12" stroke="#fff" stroke-width="1.100"/><path d="M5 1l11 5M6 3.500l7 3M0 4l3.500-3" stroke="#e8e8f4" stroke-width=".7"/></svg>
<div class="a" style="left:442px;top:590px;width:179px;height:31px;border:3px solid #e60000;"></div>
<div class="a" style="left:589.5px;top:630px;width:264.5px;height:201px;border:3px solid #e60000;"></div>
<div class="a" style="left:478px;top:837px;width:104px;height:32px;border:3px solid #e60000;"></div>
</body></html>
